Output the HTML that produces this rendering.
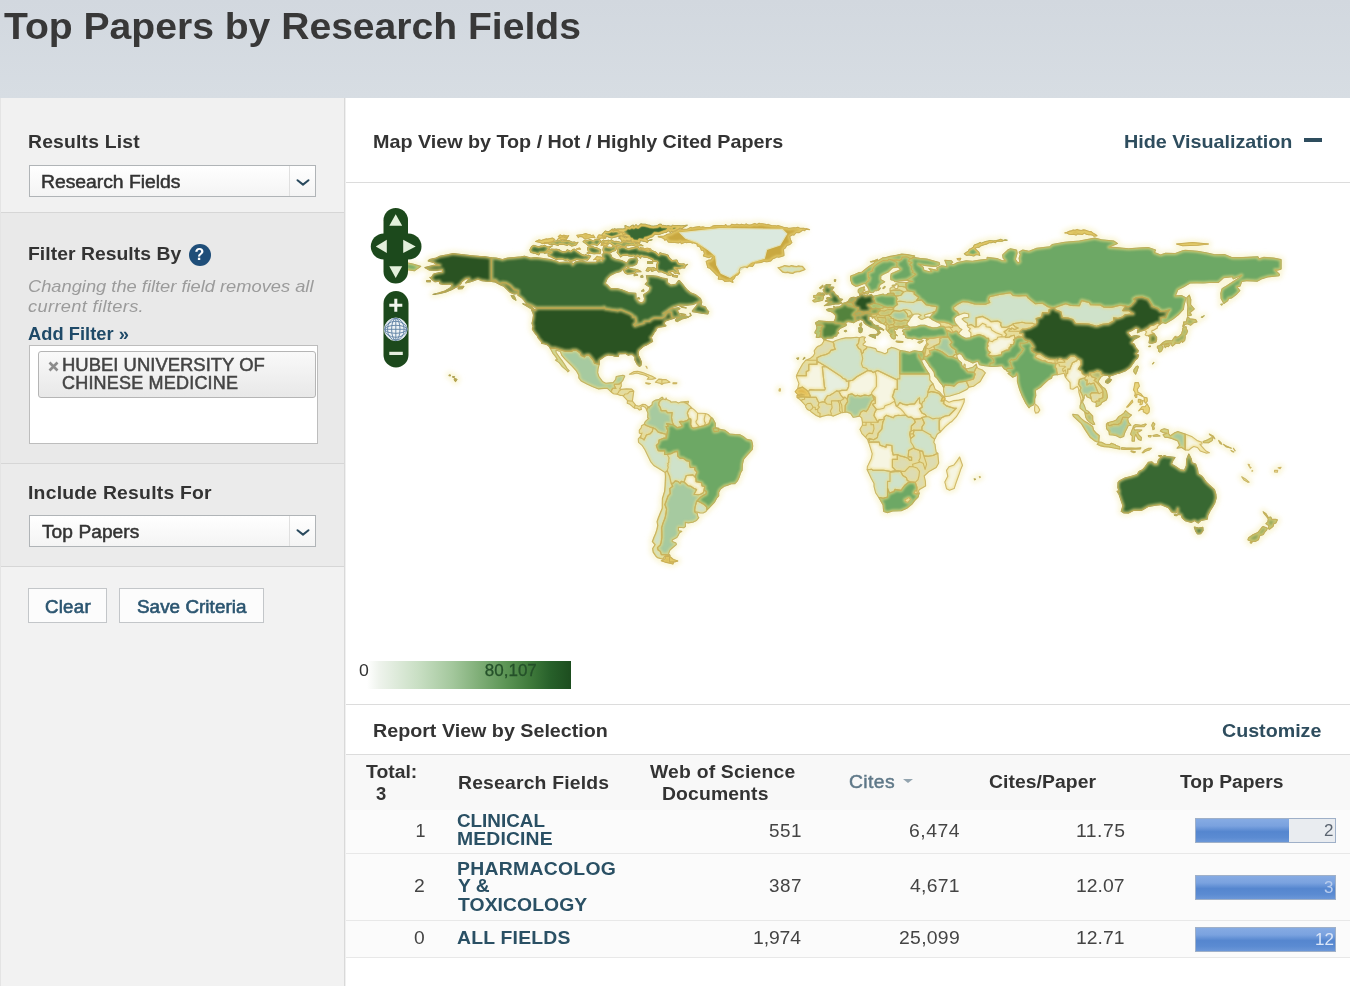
<!DOCTYPE html>
<html lang="en">
<head>
<meta charset="utf-8">
<title>Top Papers by Research Fields</title>
<style>
*{box-sizing:border-box;margin:0;padding:0}
html,body{width:1350px;height:986px;overflow:hidden}
body{position:relative;background:#f0f0f0;font-family:"Liberation Sans",Arial,sans-serif;color:#333}
.abs{position:absolute}
.t{position:absolute;white-space:nowrap;filter:blur(0.35px);transform-origin:0 50%}
#hdr{left:0;top:0;width:1350px;height:98px;background:linear-gradient(#d2d8df,#d7dde3)}
#side{left:0;top:98px;width:345px;height:888px;background:#f2f2f2;border-right:1px solid #d9d9d9;border-left:1px solid #e4e4e4}
.sec{position:absolute;left:0;width:343px}
#s1{top:0;height:115px;background:#f1f1f1;border-bottom:1px solid #d6d6d6}
#s2{top:115px;height:251px;background:#e9e9e9;border-bottom:1px solid #d6d6d6}
#s3{top:366px;height:103px;background:#ebebeb;border-bottom:1px solid #d6d6d6}
.sel{position:absolute;left:27.5px;width:287.5px;height:32px;border:1px solid #b0b4b7;background:linear-gradient(#ffffff,#f4f4f4)}
.sel .arr{position:absolute;right:0;top:0;width:26px;height:30px;border-left:1px solid #e0e0e0}
.sel .arr svg{position:absolute;left:5px;top:12px}
#main{left:346px;top:98px;width:1004px;height:888px;background:#fff}
.hline{position:absolute;left:346px;width:1004px;height:1px;background:#dcdcdc}
.btn{position:absolute;height:35px;border:1px solid #c3c6c9;background:#fcfcfc}
.bar{position:absolute;left:1195px;width:141px;height:25px;border:1px solid #9fb0c8;background:#e9ecf0}
.bar i{position:absolute;left:0;top:0;height:23px;background:linear-gradient(#86abe3 0%,#7aa2df 30%,#5586cf 55%,#5b8bd2 80%,#6b97d8 100%)}
</style>
</head>
<body>
<div id="hdr" class="abs"></div>
<div id="side" class="abs">
  <div id="s1" class="sec">
    <div class="sel" style="top:67px"><span class="arr"><svg width="16" height="9" viewBox="0 0 16 9"><path d="M2.5 2.2 L8 6.6 L13.5 2.2" fill="none" stroke="#2a4a5e" stroke-width="2" stroke-linecap="round" stroke-linejoin="round"/></svg></span></div>
  </div>
  <div id="s2" class="sec">
    <div class="abs" style="left:188px;top:31px;width:22px;height:22px;border-radius:50%;background:#1f4e79"></div>
    <div class="abs" style="left:28px;top:132px;width:289px;height:99px;background:#fff;border:1px solid #bdbdbd"></div>
    <div class="abs" style="left:37px;top:138px;width:278px;height:47px;background:linear-gradient(#f9f9f9,#e8e8e8);border:1px solid #b5b5b5;border-radius:3px"></div>
    <svg class="abs" style="left:46.5px;top:147.5px" width="11" height="11" viewBox="0 0 11 11"><path d="M1.5 1.5 L9.5 9.5 M9.5 1.5 L1.5 9.5" stroke="#8c8c8c" stroke-width="2.6"/></svg>
  </div>
  <div id="s3" class="sec">
    <div class="sel" style="top:51px"><span class="arr"><svg width="16" height="9" viewBox="0 0 16 9"><path d="M2.5 2.2 L8 6.6 L13.5 2.2" fill="none" stroke="#2a4a5e" stroke-width="2" stroke-linecap="round" stroke-linejoin="round"/></svg></span></div>
  </div>
  <div class="btn" style="left:27px;top:490px;width:79px"></div>
  <div class="btn" style="left:118px;top:490px;width:145px"></div>
</div>

<div id="main" class="abs"></div>
<div class="abs" style="left:1304px;top:138px;width:18px;height:4px;background:#2e4d5e"></div>
<div class="hline" style="top:182px"></div>

<svg class="abs" style="left:346px;top:183px" width="1004" height="470" viewBox="346 183 1004 470">
<defs><filter id="gl" x="-5%" y="-5%" width="110%" height="110%"><feGaussianBlur stdDeviation="2.4"/></filter><filter id="sb" x="-2%" y="-2%" width="104%" height="104%"><feGaussianBlur stdDeviation="0.6"/></filter><filter id="lb" x="-2%" y="-2%" width="104%" height="104%"><feGaussianBlur stdDeviation="0.75"/></filter><filter id="bg" x="-2%" y="-2%" width="104%" height="104%"><feGaussianBlur stdDeviation="1.3"/></filter></defs>
<defs><path id="land" d="M621.8,241.9L621.5,242.3L618.7,241.5L614.1,241.2L611.2,239.5L610.4,240.6L608.6,239.9L605.1,240.5L603.3,239.8L601.0,241.4L600.1,239.5L596.7,239.0L594.9,239.2L593.4,240.8L590.3,239.3L587.4,240.3L584.9,239.7L582.7,241.3L582.7,241.8L588.1,246.0L590.6,245.7L591.9,245.0L595.0,244.9L597.1,246.1L600.4,242.5L601.4,243.5L600.8,245.7L603.2,245.4L604.7,246.0L603.3,246.3L602.6,249.9L603.9,253.0L601.8,254.4L602.9,257.7L600.8,256.7L596.9,255.9L593.3,259.7L593.6,260.0L595.5,259.6L597.4,260.7L598.2,260.3L595.9,262.0L587.4,262.0L580.0,260.7L575.0,261.7L572.9,263.9L572.7,262.7L567.8,261.7L559.2,262.2L556.7,261.0L550.5,259.3L535.8,257.3L530.8,257.8L524.7,255.9L520.9,256.6L507.4,257.8L502.5,259.3L496.4,257.8L485.3,256.4L479.2,256.1L453.1,253.3L439.7,255.9L436.0,257.8L429.3,259.3L427.7,260.7L427.8,261.2L433.5,262.8L435.5,264.2L438.1,265.0L433.6,265.1L424.5,267.7L429.2,270.4L437.3,270.6L442.0,269.9L442.4,271.8L433.5,273.7L431.0,277.3L429.9,277.1L429.7,277.6L432.2,280.3L434.7,282.1L439.0,281.6L439.7,284.0L443.4,284.8L451.6,284.5L450.6,287.2L444.6,290.8L432.8,294.2L432.8,294.8L439.8,293.8L446.0,292.3L452.2,289.6L457.9,286.4L458.1,289.1L462.5,288.9L464.1,286.2L458.3,286.1L460.9,284.2L462.2,282.0L465.7,279.1L468.6,278.8L465.4,283.2L470.6,282.1L477.9,279.4L481.6,280.9L495.0,282.3L503.6,286.4L509.7,292.5L514.0,294.3L517.8,293.9L517.5,295.4L520.8,297.4L523.7,300.3L525.7,303.5L531.2,305.5L535.9,308.3L535.5,309.8L535.0,309.7L530.9,305.4L522.4,303.6L530.6,308.9L532.9,309.5L531.2,309.6L533.2,315.0L531.7,323.3L532.7,326.4L532.0,329.2L533.5,331.7L536.7,335.6L538.2,338.6L541.1,341.9L541.4,343.6L546.9,345.0L549.5,347.1L552.7,353.4L556.9,359.4L555.3,359.8L555.2,360.3L558.9,362.8L562.1,366.9L567.8,372.1L569.4,370.7L567.2,368.2L562.3,360.4L556.4,352.4L556.2,350.5L560.1,351.8L561.8,355.9L576.1,371.0L578.5,375.3L578.5,378.1L581.1,381.3L586.8,384.3L598.4,389.2L607.0,388.5L613.3,394.1L616.6,394.4L620.5,395.8L622.4,395.8L627.2,400.7L627.0,403.5L629.8,404.5L634.3,408.3L637.2,408.5L639.3,410.3L641.7,409.6L641.1,407.5L642.8,406.2L645.2,407.7L647.6,413.1L647.4,418.0L648.2,418.4L644.9,421.4L644.0,424.1L641.3,425.6L641.0,427.6L639.0,430.0L639.0,433.2L641.2,434.2L640.5,435.8L638.0,438.8L638.3,442.4L641.8,445.5L644.7,449.8L650.4,461.8L653.6,465.8L664.8,472.6L665.1,476.5L664.3,491.1L662.1,498.4L661.9,508.2L656.7,521.5L657.4,525.3L656.5,529.6L652.0,541.6L654.7,544.8L652.3,548.4L652.8,552.2L655.3,556.0L657.4,558.0L662.9,559.5L664.9,556.9L665.0,558.1L663.7,559.4L661.0,560.4L661.0,560.9L673.0,564.4L673.7,562.2L678.0,561.3L678.1,560.9L673.6,559.2L669.7,555.9L666.4,556.1L670.3,555.6L668.9,553.6L670.0,550.6L676.7,544.7L676.2,542.7L672.5,541.2L672.5,540.1L677.1,537.7L679.9,532.8L682.1,531.5L681.9,531.1L678.7,530.4L678.7,527.6L683.9,528.0L685.8,526.6L685.6,522.7L688.3,523.2L693.2,522.4L696.8,520.7L699.1,517.7L698.1,516.2L697.6,513.4L694.9,511.9L694.9,511.1L696.0,512.2L700.0,513.2L703.3,513.3L706.1,511.9L707.2,510.2L714.8,502.3L716.8,498.6L719.0,496.2L719.0,492.4L720.5,489.6L724.3,486.5L731.4,484.1L735.1,483.8L737.7,481.1L740.9,473.0L742.4,470.5L742.7,464.3L743.9,459.6L752.5,449.8L753.0,446.0L752.7,443.5L751.6,440.1L746.9,439.1L743.8,436.5L740.0,434.5L729.7,433.8L725.3,430.1L719.1,429.1L719.1,428.2L715.6,427.5L715.6,423.2L712.8,418.0L708.3,414.3L705.6,413.3L697.7,412.9L694.6,409.7L686.8,403.4L688.5,403.3L688.6,401.1L680.8,401.8L678.4,402.7L676.0,401.5L671.2,401.8L670.4,400.8L667.1,399.4L666.2,397.7L665.4,399.3L663.2,398.7L663.0,397.3L661.9,397.0L658.6,399.4L655.7,399.8L653.6,400.9L652.1,402.2L651.8,404.6L649.2,406.5L649.0,407.4L648.2,406.4L645.2,404.2L642.4,404.1L639.0,405.9L636.2,405.2L632.7,401.0L634.1,391.1L631.9,388.9L626.8,388.6L621.4,389.1L620.1,388.7L621.6,386.3L621.4,382.7L623.3,380.3L624.9,375.7L623.0,374.9L616.0,376.2L615.4,379.3L613.1,382.3L605.9,383.0L602.6,381.4L599.2,376.3L598.0,372.8L598.3,369.2L599.5,364.4L599.5,360.5L602.3,358.4L605.5,356.2L608.3,355.3L612.4,355.8L615.6,356.8L618.5,356.7L619.1,354.1L625.4,353.8L628.2,355.5L630.9,354.8L632.3,355.0L634.6,357.3L634.6,360.2L636.8,364.4L639.4,366.7L641.3,365.6L641.8,362.3L638.8,355.4L638.4,353.1L639.3,350.3L644.1,346.2L646.8,345.3L652.8,341.8L651.9,338.3L651.1,337.5L651.8,337.1L654.3,332.9L656.0,331.0L656.5,328.8L658.8,327.5L664.7,326.7L666.3,325.9L666.3,325.5L664.5,323.9L664.7,322.7L666.3,321.1L676.0,317.7L678.2,317.6L675.7,318.9L675.2,320.7L677.2,321.9L682.2,319.2L687.1,317.9L691.5,315.5L690.0,312.7L689.7,313.0L690.3,315.3L688.3,316.8L687.1,315.9L684.0,315.7L686.0,314.7L685.9,314.2L680.1,313.2L680.0,313.8L683.6,315.7L679.9,314.7L677.6,310.7L680.4,308.6L678.5,307.4L672.2,308.3L669.3,309.8L673.6,307.2L679.7,305.3L687.0,305.5L693.2,304.8L698.2,302.6L695.4,306.7L692.2,310.4L692.2,311.8L707.9,314.3L709.0,311.6L706.9,309.2L705.6,306.7L701.4,305.5L702.0,301.7L699.3,302.1L701.6,300.9L700.8,298.2L695.8,294.5L690.9,292.5L687.2,289.6L679.7,280.3L678.2,280.4L675.8,284.0L671.1,284.6L667.6,282.4L667.4,278.6L662.5,277.8L657.5,276.1L652.6,275.4L646.3,275.4L647.3,281.2L644.9,284.3L649.8,287.5L648.6,290.9L643.2,294.6L644.1,298.4L643.7,301.4L641.5,302.5L639.2,301.8L636.9,299.0L640.0,299.1L639.2,297.4L636.4,298.3L636.0,293.0L629.3,292.5L621.9,289.6L617.0,288.3L610.9,288.3L606.8,284.0L605.5,283.6L607.3,279.0L610.9,275.4L615.8,273.0L620.7,271.8L622.9,269.6L624.6,273.0L627.2,274.4L635.2,273.5L635.9,272.2L641.3,271.8L641.2,271.3L637.7,269.4L629.8,267.9L627.5,266.7L626.6,268.5L623.6,269.1L626.8,266.5L633.0,266.2L636.8,264.4L638.1,260.6L636.9,257.7L637.6,256.1L640.7,258.5L641.5,256.5L643.1,257.2L647.1,257.7L652.4,260.0L652.6,261.2L647.5,261.3L647.6,263.8L652.7,263.8L652.9,261.5L656.4,261.9L657.3,262.5L656.2,264.9L656.5,268.8L653.6,267.2L651.2,267.7L647.5,267.4L645.9,271.1L648.3,271.6L651.2,269.8L651.9,271.7L656.2,270.0L658.4,272.2L661.1,272.0L666.7,274.3L667.2,275.2L670.5,275.5L672.7,274.8L672.4,276.7L677.5,277.4L677.9,275.6L672.9,275.1L672.0,273.7L669.8,272.2L673.0,271.6L675.1,274.0L676.7,273.3L679.8,274.2L679.9,273.8L678.4,271.6L678.3,270.1L676.1,268.6L680.8,268.9L681.8,268.1L684.9,268.3L685.1,267.0L687.8,264.6L687.8,264.2L685.4,265.0L684.3,263.6L678.7,263.3L677.0,259.8L672.5,260.2L670.2,258.2L668.8,256.5L668.3,254.9L659.9,252.4L658.9,254.4L655.8,251.6L652.9,250.7L651.8,249.8L648.6,250.7L647.1,250.3L650.9,249.4L650.9,248.8L647.8,247.9L644.3,248.4L643.1,247.5L641.9,247.9L640.3,247.1L639.6,248.3L638.2,246.5L638.6,246.1L643.4,245.9L638.4,242.9L640.0,243.3L640.3,240.8L645.4,241.9L647.5,242.8L648.5,240.8L652.3,240.0L652.1,239.4L648.3,240.3L646.6,239.0L648.0,239.0L650.1,237.7L652.7,236.9L655.1,234.4L659.0,234.9L664.6,232.7L666.1,232.7L668.4,231.1L670.4,232.8L671.8,231.5L672.5,232.1L670.6,233.5L666.2,234.3L665.6,235.1L663.5,236.0L660.2,236.1L658.0,236.4L657.7,236.8L663.5,238.7L664.7,240.6L666.3,239.7L668.3,242.4L678.5,243.2L680.2,242.3L681.4,244.0L685.0,242.6L686.5,242.9L689.0,242.6L692.3,243.4L693.5,243.1L696.8,244.4L697.1,246.2L699.9,247.3L701.2,250.5L703.3,250.8L704.1,253.2L703.2,256.2L708.9,258.0L711.0,256.9L712.4,257.5L710.6,259.8L708.9,259.7L705.9,261.2L707.3,267.5L709.5,268.4L715.8,274.9L718.4,276.6L718.1,279.3L722.0,279.7L723.2,280.1L724.6,281.7L729.6,281.2L733.0,282.7L733.3,282.4L732.7,280.3L734.5,278.8L735.7,276.1L738.2,275.1L739.9,272.6L739.5,270.4L740.6,268.3L745.1,267.1L747.2,268.1L749.3,266.2L752.6,266.8L754.8,263.3L761.2,262.8L764.2,261.6L767.6,261.9L770.9,261.2L773.1,259.0L777.0,257.2L778.7,257.5L784.2,255.9L783.7,249.5L785.4,248.3L786.9,245.8L789.9,244.8L792.1,242.7L790.0,236.6L792.6,235.1L794.1,235.3L796.3,232.8L799.3,232.9L803.0,230.4L805.0,231.0L805.9,228.9L803.8,228.0L800.0,228.1L798.0,226.9L795.7,227.6L793.6,227.4L788.8,228.1L783.6,227.1L777.9,225.3L776.9,225.8L772.5,225.4L768.3,224.1L766.3,224.4L759.0,222.9L757.0,224.2L754.8,223.2L749.3,224.8L746.1,223.6L744.5,224.7L741.3,224.0L739.7,224.6L737.0,223.9L734.7,224.5L731.6,224.0L730.0,225.6L727.1,225.8L725.7,224.2L724.3,225.5L721.8,225.2L714.8,225.3L712.6,225.8L709.8,227.2L705.3,227.3L703.1,226.6L700.7,227.0L699.6,226.3L691.9,227.7L691.1,227.0L686.8,229.1L682.4,229.1L679.7,229.7L679.0,229.0L680.1,228.2L682.3,229.0L684.0,227.3L687.6,225.0L680.8,225.7L672.1,225.0L671.5,226.1L668.2,225.4L666.7,225.7L663.1,225.1L662.6,225.5L661.1,223.9L659.0,224.1L657.0,225.5L653.4,225.9L651.1,225.7L645.4,224.0L640.9,223.6L637.9,226.1L636.1,224.4L633.8,226.3L633.1,224.7L629.4,227.0L625.0,225.2L624.9,228.5L616.5,228.8L616.3,229.3L614.8,228.5L612.8,229.2L612.4,228.7L609.1,231.2L607.4,231.4L605.1,230.7L601.8,234.4L602.2,235.5L600.1,234.6L598.4,234.7L596.8,237.8L600.2,238.7L601.5,238.2L605.3,238.8L605.5,238.1L606.1,237.9L606.2,236.3L611.8,238.3L620.4,235.8L619.5,237.5ZM629.1,259.1L626.6,262.6L621.9,260.3L615.8,259.1L612.2,257.4L611.0,254.3L608.2,252.8L610.5,253.0L612.8,251.6L615.7,250.7L616.2,248.4L617.5,250.4L616.8,252.7L620.4,257.2L623.0,255.7L627.5,255.5L628.6,256.2L632.0,256.6L633.2,256.1L635.9,257.5ZM616.3,246.4L617.2,245.4L620.7,246.7L620.2,247.1ZM628.1,246.0L631.5,245.3L636.3,246.8L628.4,248.5L626.0,247.6L626.7,245.8ZM629.2,241.2L631.0,240.3L631.0,241.6L626.4,240.9L626.7,240.5ZM634.8,242.0L634.6,242.0L634.7,242.0ZM636.1,243.8L635.1,242.1L637.6,242.7ZM623.3,235.8L623.6,236.1L627.2,237.2L625.6,237.7L622.9,236.4ZM615.3,230.2L614.5,230.3L614.7,230.0ZM608.4,245.0L608.2,243.3L609.9,243.5L613.2,245.7L611.4,247.1L607.6,246.7L606.7,245.8ZM606.7,243.7L606.1,243.5L607.0,243.3ZM599.9,259.5L602.6,259.3L602.0,260.9L598.4,260.3ZM684.6,402.4L685.7,401.9L685.7,402.9ZM578.3,237.9L579.7,236.7L582.4,237.1L584.3,239.1L587.7,239.0L590.2,238.0L592.5,237.6L594.9,238.1L595.3,237.8L593.4,234.7L591.7,235.3L585.7,233.2L581.9,234.4L576.6,235.1L576.5,235.6ZM557.9,236.7L559.2,237.4L557.0,239.6L557.1,240.1L558.9,238.9L561.3,239.9L563.4,239.5L566.2,240.1L569.0,235.5L568.6,235.2L567.4,235.7L563.9,234.9L562.0,235.4L560.1,234.6ZM566.1,237.7L565.8,237.8L564.3,237.0L564.8,237.0ZM535.2,241.4L535.4,241.8L540.4,242.9L541.9,243.9L548.6,243.5L549.1,244.7L554.1,244.5L558.1,245.8L559.4,244.5L563.8,244.7L567.4,245.7L568.8,244.8L571.5,246.4L576.7,245.0L578.3,242.4L578.0,242.1L576.4,242.6L574.7,241.7L572.4,241.9L568.7,240.3L562.0,240.8L560.9,239.8L553.6,241.1L555.1,239.4L552.4,237.8L547.7,238.8L546.4,238.6L541.4,240.2L538.9,239.6ZM576.0,249.0L576.3,249.4L580.8,249.4L579.5,247.6ZM530.7,252.7L534.9,253.5L538.8,255.2L540.2,252.9L543.9,253.0L544.2,253.5L549.3,253.0L547.8,253.6L548.1,256.1L556.8,260.0L558.0,259.4L562.3,259.4L565.7,260.8L567.1,260.1L570.3,261.9L575.9,260.3L576.1,259.8L582.5,260.6L585.3,260.0L587.7,260.5L591.1,256.1L586.6,255.0L586.0,254.1L584.6,254.8L582.3,254.3L574.5,248.9L572.7,249.1L570.7,250.9L567.1,249.4L566.3,251.0L563.0,251.4L559.8,250.2L559.7,249.5L556.3,248.9L551.6,248.8L548.6,249.6L549.2,248.6L552.6,246.1L552.6,245.7L547.3,246.5L544.5,245.0L542.9,245.7L541.0,245.6L538.7,246.4L533.9,245.0L531.4,246.3L529.6,249.8ZM586.8,253.4L588.1,254.2L590.5,253.4L593.2,254.0L600.3,253.9L600.9,249.7L598.7,248.4L594.8,247.3L592.6,246.1L587.6,247.1L587.2,250.1L589.3,252.0L587.2,252.1ZM395.3,269.3L397.9,267.5L397.9,268.2L414.5,271.1L421.1,266.4L412.8,263.7L405.4,262.2L395.5,259.3ZM633.9,275.9L637.9,275.5L638.1,275.1L636.6,273.9L634.1,274.2ZM640.5,277.3L643.2,277.4L642.7,275.2L640.8,275.5ZM426.5,282.0L430.5,282.1L430.7,280.5L426.6,280.3ZM641.2,291.0L644.1,291.3L643.7,289.2L643.3,289.1ZM515.9,300.6L516.3,300.3L514.5,295.7L510.9,295.2L512.6,298.6ZM645.8,365.9L645.7,366.4L647.3,368.7L646.9,366.6ZM648.4,377.5L647.0,379.5L652.6,379.4L656.1,378.5L652.2,375.9L642.8,372.3L637.9,371.0L634.0,371.3L629.1,374.2L629.4,374.6L632.9,374.3L636.6,373.4L645.1,375.5ZM448.9,375.9L450.5,376.0L450.6,374.8L449.0,374.7ZM452.6,377.4L454.1,377.7L454.8,376.6L452.7,376.2ZM454.0,380.0L455.6,381.9L457.3,379.3L454.5,378.1ZM645.8,383.7L649.1,384.4L650.9,383.5L645.6,382.5ZM782.4,272.4L785.2,273.1L787.7,272.7L792.9,273.7L794.9,272.5L799.6,271.9L805.4,269.4L802.7,266.1L798.6,265.6L796.5,266.2L791.3,265.3L789.1,266.1L784.6,265.3L777.7,267.5ZM820.6,288.9L823.3,286.6L822.9,284.9L819.4,287.7ZM825.0,295.2L824.5,293.8L823.4,292.7L820.6,293.0L820.3,292.5L817.8,292.9L816.6,294.4L816.9,294.9L813.5,295.3L813.5,297.6L815.6,298.2L812.4,300.7L813.5,302.0L814.7,302.3L822.7,300.6L823.8,297.7L823.5,295.7ZM824.0,305.5L824.3,305.9L835.4,304.3L839.1,304.2L842.0,303.0L840.7,301.9L842.9,299.2L839.3,298.4L838.3,295.7L835.6,294.3L834.6,292.1L833.3,290.8L831.8,290.8L834.2,287.1L829.3,286.7L830.9,284.9L830.8,284.4L825.9,284.4L823.7,286.6L824.0,288.9L822.7,289.9L824.3,292.9L825.8,293.6L825.7,294.5L829.6,294.1L829.7,295.3L830.8,297.1L826.8,297.5L826.5,299.0L827.5,299.6L825.0,301.2L829.0,302.3L827.8,302.5L825.6,304.7ZM686.3,308.2L686.4,307.6L679.3,305.8L682.0,307.7ZM833.7,321.5L818.6,320.7L815.3,322.6L816.6,327.6L816.1,329.5L814.9,331.5L814.6,333.2L816.4,334.2L816.0,337.7L821.2,337.2L824.2,340.0L823.5,340.2L823.3,341.7L821.4,344.4L817.2,346.3L815.9,347.7L813.9,350.7L814.4,353.5L813.0,355.8L809.9,358.4L805.6,360.0L802.4,363.8L798.9,369.7L796.2,375.5L796.1,376.9L798.6,383.6L797.4,388.4L795.0,391.8L797.2,394.6L796.7,395.7L797.0,397.7L801.2,401.2L805.3,405.7L805.4,407.1L807.3,409.9L809.8,411.0L816.0,415.8L819.7,417.4L828.5,415.2L833.4,416.4L841.3,413.1L846.6,412.4L850.4,413.8L852.9,417.5L859.2,416.4L861.4,418.1L862.1,422.1L862.1,425.2L859.7,429.5L861.7,433.7L867.5,440.0L871.9,453.8L871.0,458.3L867.0,466.7L866.9,469.9L873.7,483.7L873.7,486.3L875.3,492.8L882.8,505.1L883.4,511.7L887.5,512.9L892.7,511.3L901.3,511.0L907.1,508.5L912.3,504.3L914.8,500.9L918.3,497.4L919.5,493.2L918.8,491.1L919.7,489.7L925.9,486.1L925.7,481.3L924.5,476.1L929.3,471.6L936.4,467.7L939.0,463.2L938.1,453.3L936.5,451.9L935.3,444.2L934.1,442.3L935.0,439.3L937.4,434.5L940.8,431.9L945.5,426.9L949.9,423.1L951.7,422.1L956.6,416.9L961.1,409.5L964.3,402.4L964.5,398.6L953.9,400.3L949.0,402.0L945.1,399.7L945.4,398.4L944.5,396.5L942.8,395.3L939.8,391.8L935.6,389.4L933.3,383.6L930.1,379.8L930.1,376.4L929.3,373.9L923.9,365.3L918.9,356.1L920.7,359.1L922.5,360.2L923.2,359.4L924.7,359.5L929.6,367.1L931.5,369.1L934.0,372.7L934.5,376.4L937.0,378.6L942.1,385.4L943.3,387.8L943.3,391.6L944.3,395.4L945.3,397.1L950.1,396.3L959.2,393.6L966.9,389.9L969.1,387.4L973.8,386.5L980.5,381.7L985.7,372.9L982.6,369.9L978.3,368.3L977.1,366.8L976.4,363.8L972.7,366.9L967.7,368.3L965.3,368.2L964.8,367.9L965.5,367.7L965.5,364.6L964.1,363.8L963.2,366.6L962.1,365.1L961.8,362.4L958.6,359.9L956.7,354.8L957.9,354.9L958.9,353.9L961.3,354.5L964.8,359.9L972.8,363.3L976.6,361.9L978.1,361.9L979.2,365.0L991.5,366.8L1001.7,366.0L1003.7,368.9L1005.9,370.1L1006.7,371.4L1009.6,372.7L1007.8,373.1L1007.6,373.5L1012.6,377.5L1015.8,376.2L1016.6,374.5L1017.1,376.5L1017.1,381.4L1019.6,390.2L1025.5,403.4L1029.0,408.3L1030.7,406.5L1033.6,405.2L1035.0,402.7L1035.0,399.0L1036.1,395.7L1035.7,390.5L1040.9,387.2L1048.8,379.9L1051.8,378.4L1052.6,375.7L1063.9,373.6L1065.1,377.2L1069.7,382.7L1070.1,388.9L1073.1,389.6L1077.3,386.9L1078.3,388.7L1078.6,392.4L1080.6,399.2L1080.6,403.3L1079.8,405.7L1079.8,408.3L1084.4,412.1L1085.5,417.5L1087.3,420.6L1092.8,424.8L1094.8,424.6L1095.0,424.2L1093.1,420.3L1092.9,415.9L1088.9,411.4L1086.0,409.9L1084.3,404.9L1082.8,402.1L1084.3,398.5L1084.6,395.5L1086.2,395.2L1086.5,396.9L1089.6,398.2L1091.2,399.4L1091.5,401.1L1092.8,402.1L1095.1,402.6L1096.0,403.4L1095.8,407.0L1097.5,406.7L1101.0,404.8L1102.0,402.7L1106.7,400.1L1107.7,397.2L1106.7,390.9L1105.0,388.2L1102.2,386.5L1098.6,382.0L1099.1,380.2L1101.2,377.2L1103.9,375.4L1108.2,375.8L1109.7,378.5L1110.2,376.2L1119.3,373.6L1125.8,371.1L1130.5,367.7L1135.9,359.9L1137.7,358.8L1139.0,354.9L1136.4,353.7L1138.2,352.4L1138.5,350.3L1136.0,347.3L1134.5,343.8L1132.0,342.7L1134.4,339.8L1140.2,336.3L1135.5,335.2L1131.2,336.3L1128.3,332.6L1132.7,330.6L1136.0,328.2L1138.2,329.0L1137.4,330.0L1137.4,333.1L1144.2,330.4L1146.2,331.9L1144.8,334.9L1146.2,335.9L1148.3,335.9L1149.4,337.5L1148.8,343.2L1152.0,343.6L1156.0,342.3L1156.9,339.9L1156.9,337.3L1154.3,333.3L1152.0,331.9L1152.2,330.8L1154.0,330.4L1157.5,328.4L1157.7,326.8L1159.9,324.7L1162.8,322.9L1165.6,323.8L1173.0,319.4L1179.2,314.5L1183.7,309.5L1184.2,305.8L1186.4,297.8L1181.5,295.2L1175.8,295.6L1178.0,290.1L1190.2,283.3L1218.4,282.8L1223.9,277.9L1232.4,277.0L1233.2,279.2L1240.4,276.1L1239.1,277.4L1221.8,288.5L1220.5,293.5L1220.8,298.4L1223.9,303.8L1227.9,301.0L1228.9,298.7L1232.1,298.1L1237.0,294.2L1240.0,290.8L1237.4,286.9L1240.2,286.4L1242.0,281.8L1246.7,280.9L1257.3,281.6L1261.5,279.1L1267.6,277.2L1279.3,275.9L1279.6,274.1L1275.8,270.2L1277.5,270.4L1281.4,269.2L1281.4,259.6L1273.8,257.8L1263.9,257.1L1259.1,258.5L1258.0,256.4L1241.7,257.3L1232.0,257.3L1224.6,254.2L1214.7,254.4L1197.5,251.0L1185.2,250.0L1182.6,250.5L1175.3,253.2L1165.5,252.9L1160.6,254.6L1154.8,252.4L1155.8,249.8L1148.3,247.3L1128.6,248.5L1110.2,246.9L1117.8,243.4L1113.9,240.7L1101.6,239.5L1094.9,237.8L1079.3,240.7L1064.6,242.0L1052.3,244.2L1049.7,246.4L1036.3,248.1L1028.9,251.0L1022.7,249.8L1018.8,251.9L1020.0,254.5L1018.8,258.1L1019.5,261.6L1018.0,262.6L1015.7,259.3L1017.4,253.3L1016.9,249.9L1010.5,248.5L1007.9,249.6L1002.4,254.8L1002.8,258.2L1004.9,260.6L1002.0,260.3L997.0,258.3L987.1,257.1L986.8,259.1L972.4,261.0L966.2,260.5L957.5,262.2L953.9,264.2L951.0,264.0L953.0,262.3L951.6,260.5L944.8,260.0L944.5,260.4L946.7,266.3L941.5,265.4L936.5,267.7L937.4,269.8L928.7,268.3L928.6,268.8L931.1,271.3L929.3,271.5L924.2,270.1L923.4,267.0L919.9,264.7L924.4,265.7L933.0,266.7L936.7,266.5L939.9,264.9L939.4,262.3L926.9,258.8L913.5,257.2L915.0,256.3L914.9,255.8L907.2,254.3L901.7,253.8L885.0,257.5L882.5,257.6L878.8,260.0L876.7,260.6L877.9,259.5L877.6,259.0L870.2,261.5L870.1,262.0L871.5,262.3L874.6,261.6L873.5,263.3L868.4,266.4L861.6,272.0L859.1,272.2L850.6,275.7L850.2,276.7L850.6,280.6L851.9,284.2L855.5,286.5L858.1,286.2L863.7,284.0L865.6,283.8L865.8,285.6L867.3,287.1L869.0,290.7L865.5,291.5L865.2,292.4L864.9,292.0L862.8,292.2L863.6,291.1L865.4,290.2L864.1,289.4L864.6,286.6L859.3,288.1L857.9,289.8L858.0,292.3L859.9,295.0L859.3,295.9L856.0,297.3L853.5,297.0L849.7,298.2L848.2,300.6L846.5,302.0L842.1,303.2L841.7,305.2L838.5,306.6L835.4,306.9L833.5,306.2L834.0,308.7L829.7,308.3L826.3,309.4L827.3,311.1L831.0,312.0L835.1,315.1L835.1,318.8ZM895.3,347.9L891.4,347.1L887.6,349.1L887.2,352.1L885.0,353.4L877.1,350.8L875.8,348.4L866.8,346.5L863.4,344.8L863.4,344.1L865.9,341.9L864.7,340.4L864.4,339.0L865.7,337.3L862.4,336.4L859.4,337.4L856.8,337.0L845.6,337.6L835.7,340.3L832.9,341.7L825.2,339.8L827.6,338.5L833.0,338.3L834.5,336.7L836.8,336.2L837.3,334.4L839.1,333.2L837.9,331.3L840.2,328.6L846.4,325.6L846.7,324.4L846.0,322.7L848.2,321.9L853.6,323.0L860.2,319.7L862.2,320.5L863.4,321.6L863.9,323.1L865.5,324.5L870.1,327.3L874.6,328.8L876.7,330.3L877.8,332.5L876.8,334.1L871.1,334.2L868.6,335.4L875.6,338.5L875.7,336.3L876.5,335.1L878.1,335.4L880.8,332.7L879.2,330.8L880.2,329.2L882.2,329.6L883.4,330.9L884.1,329.7L877.9,326.3L878.3,325.2L875.3,325.0L873.5,323.9L872.0,321.2L869.1,319.7L869.3,318.1L869.0,317.3L870.6,316.5L871.5,316.6L872.3,318.6L873.9,317.6L875.5,320.1L880.0,323.0L883.7,324.4L885.5,325.7L886.0,327.0L885.8,329.5L890.0,334.5L890.9,334.5L889.9,335.5L891.4,338.1L893.5,339.2L895.5,338.9L895.7,336.7L895.3,335.4L895.8,335.3L897.4,336.1L897.8,335.9L895.1,332.9L895.9,332.2L894.2,330.1L894.7,329.1L895.8,329.8L897.0,329.9L898.5,328.1L902.4,328.4L903.2,328.1L908.9,328.1L909.2,328.8L905.4,328.8L902.5,329.9L902.2,331.6L904.0,332.8L902.7,334.4L905.2,335.4L905.6,337.7L912.6,339.4L913.7,338.3L918.2,339.9L921.3,339.8L923.5,338.3L926.8,338.7L925.8,340.1L926.5,343.1L922.4,351.3L914.5,350.4L909.6,352.1L900.3,350.2ZM884.4,294.7L883.3,293.7L873.3,295.9L871.3,294.1L865.5,295.7L865.5,294.7L863.5,294.7L861.9,293.9L862.4,293.0L862.9,293.7L864.9,293.7L865.2,293.2L867.4,294.7L868.6,293.8L869.6,291.8L870.2,292.8L873.6,292.5L874.6,291.1L876.8,291.0L878.8,289.6L878.3,290.4L878.8,290.6L880.1,289.3L880.7,288.0L880.2,287.7L878.9,289.4L880.4,284.7L885.1,281.8L880.9,279.4L881.1,275.9L888.4,272.3L893.0,267.9L897.6,267.5L900.2,269.1L891.0,273.5L890.4,276.7L890.7,280.0L893.0,280.5L894.7,282.0L906.7,280.4L909.6,281.1L907.1,282.3L902.2,282.0L895.7,283.0L895.9,284.6L898.2,285.5L897.3,288.2L895.5,288.3L894.0,286.5L891.3,287.0L889.7,288.5L890.1,292.8L887.4,293.4L886.5,294.6ZM939.5,418.3L940.9,418.1L939.5,420.0ZM940.3,326.2L936.6,327.4L932.8,327.6L924.9,324.9L920.2,324.9L915.5,326.6L910.0,326.9L907.5,325.1L907.2,323.6L911.5,317.2L914.1,314.5L918.4,314.3L920.6,315.3L918.0,317.1L920.3,319.3L922.0,319.7L928.6,317.1L928.3,316.6L925.3,316.9L924.8,315.2L932.3,313.1L933.7,313.1L931.6,314.5L930.3,316.4L928.6,317.5L931.1,318.9L931.6,319.6L939.9,323.7L940.6,325.0ZM962.3,329.5L960.3,328.4L955.4,322.6L954.3,318.7L956.6,316.2L964.3,313.3L968.4,314.2L968.4,316.9L963.7,317.6L961.7,318.9L964.1,321.4L967.1,323.4L967.1,326.0L968.0,327.4L969.9,328.7L968.4,330.6L970.6,332.9L970.6,337.4L966.0,338.1L962.0,336.2L959.0,333.8L959.8,332.0ZM805.4,358.0L804.2,357.2L802.9,359.5L803.3,359.6ZM798.0,359.7L799.0,358.0L798.8,357.6L796.4,358.3ZM661.8,384.8L663.8,383.6L670.1,382.6L670.3,382.2L666.2,379.3L658.7,378.8L655.0,382.2L655.2,382.6L659.8,383.6ZM672.8,384.0L676.5,384.1L677.2,382.9L672.9,382.4ZM778.8,391.0L780.5,391.3L780.7,388.7L779.0,388.5ZM834.1,281.5L835.6,281.8L836.1,279.6L834.2,279.6ZM882.9,289.0L884.5,288.3L885.5,286.5L884.3,286.2L882.6,288.0ZM859.2,325.7L860.6,326.8L858.2,327.8L858.7,332.1L860.2,333.1L862.0,332.2L862.7,328.9L861.2,326.9L862.1,325.0L861.6,322.5L859.2,324.1ZM845.8,332.1L847.0,331.1L845.9,329.9L843.9,331.1ZM892.3,286.4L895.0,286.2L895.9,284.6L892.0,285.2ZM895.9,341.9L899.0,342.7L902.8,342.6L903.3,341.6L896.1,340.8ZM919.5,343.6L921.9,342.5L923.6,340.4L919.4,341.2L917.5,342.0L917.6,342.4ZM1076.1,235.4L1077.7,234.3L1082.3,234.8L1084.3,233.5L1086.4,234.6L1092.7,235.6L1094.0,236.6L1097.4,235.8L1091.2,231.3L1089.9,231.4L1083.7,229.6L1081.2,230.2L1077.1,229.1L1075.2,229.9L1073.1,229.7L1064.5,232.9L1064.7,233.2L1066.7,233.2L1069.1,234.6L1074.1,234.7ZM964.0,253.8L966.2,255.6L969.1,255.2L973.9,256.3L975.8,255.1L978.1,255.1L980.0,255.8L979.2,252.1L975.3,248.4L977.5,247.6L979.2,247.6L980.6,246.2L987.0,244.2L989.0,243.0L991.2,243.1L993.3,242.2L995.5,243.0L997.0,241.5L1001.6,241.6L1005.0,240.0L1003.3,240.1L1000.9,239.0L998.4,239.8L993.7,240.6L990.0,240.2L985.6,241.2L981.3,242.9L980.1,242.2L974.1,244.9L972.9,247.1L970.6,248.7L969.1,248.9L968.3,250.8ZM957.5,260.1L960.2,260.3L961.1,258.2L957.0,258.3ZM1133.4,371.6L1135.8,374.5L1137.2,371.4L1138.6,366.5L1137.4,365.7L1135.8,366.5L1133.7,369.5ZM1105.5,382.7L1108.1,383.6L1110.4,382.0L1111.6,379.5L1109.0,378.4L1107.8,378.6L1105.4,380.7ZM1135.3,397.7L1136.9,397.6L1137.1,395.0L1134.2,394.8ZM1133.0,402.3L1132.6,400.0L1132.2,399.8L1126.4,407.4L1128.0,407.2ZM1035.3,413.2L1038.2,412.8L1040.1,410.1L1038.3,406.5L1035.1,403.5L1034.3,407.7L1034.3,410.6ZM1129.5,417.5L1131.8,414.9L1129.0,413.3L1125.5,410.3L1123.7,412.9L1118.5,416.4L1116.1,419.7L1112.5,421.4L1112.0,421.1L1107.9,422.4L1106.2,423.8L1106.4,429.0L1108.6,431.5L1109.2,435.0L1116.2,436.0L1120.2,438.0L1123.9,436.7L1124.7,433.9L1128.3,426.0L1131.3,425.3L1128.9,422.2L1128.2,419.6L1128.6,417.7ZM1073.0,416.4L1081.1,423.7L1089.7,437.4L1094.7,441.4L1097.3,442.3L1098.6,442.2L1096.9,444.5L1099.9,445.9L1103.9,446.9L1108.9,447.3L1120.2,449.2L1119.9,446.5L1115.8,445.1L1115.6,444.5L1111.4,443.0L1109.8,444.2L1105.5,443.9L1101.6,441.9L1099.1,441.8L1099.6,435.4L1096.6,433.1L1093.9,430.0L1092.9,426.3L1088.9,423.3L1085.2,421.3L1081.3,418.2L1078.3,414.8L1072.6,413.9ZM1130.2,434.3L1132.0,436.3L1131.9,441.4L1134.7,441.3L1134.8,437.5L1135.7,435.0L1138.2,439.6L1141.3,440.6L1141.6,437.3L1139.1,434.8L1137.7,432.5L1139.3,432.1L1142.1,429.9L1134.9,429.8L1134.1,428.1L1136.0,426.9L1144.2,427.0L1146.5,424.1L1145.3,423.7L1140.9,425.1L1135.3,424.3L1133.2,425.9ZM1121.2,449.3L1128.6,449.7L1140.4,449.2L1141.2,447.8L1126.1,447.8L1121.7,447.2ZM1130.8,451.8L1134.0,453.1L1135.8,451.9L1131.0,450.6ZM948.8,466.5L946.3,470.3L947.5,476.2L944.5,481.9L946.3,488.9L949.5,490.5L954.4,488.7L961.1,469.3L962.8,465.4L959.8,456.8L959.3,456.8L953.7,464.8ZM979.6,478.0L980.8,476.9L979.2,476.2L979.0,476.6ZM974.8,480.2L975.8,479.0L973.9,478.7L973.8,479.1ZM1208.6,244.3L1208.6,243.7L1192.5,242.2L1176.3,244.0L1182.7,246.0L1197.5,245.5ZM1221.5,305.5L1222.8,304.2L1222.7,303.7L1220.6,304.1ZM1186.6,297.6L1187.6,306.9L1187.3,315.8L1191.1,315.7L1191.6,314.1L1190.1,313.0L1194.6,308.9L1190.9,304.4L1191.1,299.6L1189.5,294.7ZM1202.5,317.7L1204.6,315.9L1204.6,315.5L1200.9,317.1L1201.0,317.4ZM1184.7,325.8L1184.2,324.5L1185.2,324.8L1187.1,324.1L1190.9,325.5L1193.7,323.1L1197.3,321.8L1195.9,319.3L1190.2,318.6L1187.5,316.4L1185.9,321.7L1183.4,321.8L1182.4,326.5ZM1170.6,344.2L1172.4,346.4L1175.3,344.2L1175.4,343.6L1179.8,343.6L1181.9,341.4L1182.1,342.7L1182.4,342.8L1184.9,340.7L1185.5,335.4L1186.7,334.4L1187.9,331.1L1186.7,328.8L1186.3,326.5L1183.2,327.0L1182.4,328.6L1182.4,330.1L1181.2,333.6L1178.8,336.2L1175.9,337.4L1176.3,336.0L1174.7,336.4L1172.6,339.2L1172.2,340.5L1165.4,340.7L1160.0,344.8L1157.2,346.0L1157.1,348.0L1158.3,349.3L1158.3,351.5L1159.8,352.4L1161.8,351.2L1163.3,347.6L1162.5,345.5L1161.2,345.0L1168.0,343.6L1170.9,343.4ZM1163.7,346.3L1165.5,348.1L1166.4,346.5L1168.5,346.9L1170.0,345.2L1168.4,343.6L1164.1,344.7ZM1148.5,346.8L1150.3,346.8L1150.7,345.8L1148.6,345.9ZM1154.2,362.4L1153.7,362.1L1152.2,364.2L1153.4,363.7ZM1133.2,390.0L1134.7,392.4L1135.0,394.3L1138.3,394.8L1143.8,397.2L1144.3,401.9L1146.0,403.5L1147.6,400.9L1147.3,397.8L1143.9,397.0L1141.1,393.5L1138.2,392.1L1137.8,389.2L1139.7,386.2L1138.6,382.3L1134.7,382.4ZM1137.9,402.3L1139.9,402.6L1140.3,402.2L1139.7,405.0L1142.0,404.8L1143.6,400.3L1140.9,400.8L1141.3,399.4L1138.3,399.1ZM1143.1,412.0L1147.0,414.3L1149.3,412.5L1149.8,408.1L1147.2,403.5L1144.9,406.4L1141.9,406.5L1138.4,410.8L1138.8,411.1L1141.0,409.7L1143.0,409.7ZM1152.7,429.9L1154.7,429.0L1154.0,426.5L1155.2,424.1L1153.2,422.0L1151.4,425.2ZM1153.0,436.5L1156.9,436.5L1160.4,436.0L1156.9,434.2L1152.8,435.2ZM1148.3,437.0L1150.9,437.2L1151.5,435.4L1148.1,435.2ZM1214.7,439.1L1215.2,438.8L1213.7,436.0L1209.1,433.8L1209.5,435.0L1213.5,437.7ZM1160.0,431.1L1162.9,432.9L1166.0,433.4L1162.7,434.7L1164.8,437.7L1166.7,437.5L1171.5,438.7L1177.5,441.3L1179.2,445.2L1176.8,448.0L1176.9,448.5L1181.4,447.8L1185.1,450.2L1188.9,450.4L1193.8,446.8L1197.3,447.7L1200.1,451.2L1206.0,453.4L1209.8,452.8L1206.2,450.9L1200.5,444.4L1202.3,444.2L1202.1,442.1L1197.1,440.1L1191.7,436.1L1177.8,431.3L1173.9,432.8L1170.4,435.3L1169.0,433.7L1168.4,429.6L1164.3,428.4L1161.0,429.5ZM1203.5,443.1L1208.7,443.1L1212.4,440.8L1213.2,437.8L1210.9,437.7L1203.0,441.3ZM1221.7,444.6L1222.1,444.2L1221.1,442.2L1218.4,440.1L1219.9,443.7ZM1231.4,448.5L1231.6,447.9L1223.0,444.2L1225.6,447.0ZM1233.4,447.9L1233.1,448.3L1235.3,451.1L1235.4,450.7ZM1145.9,451.4L1149.6,450.2L1151.7,448.0L1148.2,448.1L1144.4,449.9L1141.8,452.9L1143.5,453.1ZM1233.8,452.2L1234.0,451.6L1230.7,450.2L1232.2,451.9ZM1158.9,456.7L1160.7,457.0L1162.1,455.4L1158.7,455.2ZM1249.0,466.5L1249.9,464.7L1248.0,464.0L1247.9,464.4ZM1250.2,468.5L1251.4,467.4L1249.5,466.5L1249.3,466.8ZM1280.2,469.0L1281.2,467.0L1277.9,467.6L1278.0,468.0ZM1251.8,471.6L1253.1,470.9L1252.1,470.1L1251.8,470.3ZM1274.2,472.1L1277.5,472.4L1277.9,470.3L1274.3,470.1ZM1247.5,482.4L1249.2,482.4L1249.4,482.1L1245.6,478.7L1241.5,476.5L1243.5,479.9ZM1117.1,490.8L1116.7,491.2L1119.0,494.9L1122.6,505.8L1120.9,511.5L1123.6,513.1L1128.6,513.4L1133.6,510.7L1141.4,510.7L1148.4,506.8L1160.8,504.9L1168.2,508.0L1171.4,512.3L1172.8,512.9L1176.5,513.1L1177.5,509.9L1177.7,514.6L1174.2,514.5L1174.5,515.8L1176.9,516.0L1177.8,514.8L1180.8,514.9L1182.0,518.2L1185.0,520.9L1191.3,522.7L1194.5,521.0L1198.2,523.4L1201.3,520.7L1207.5,519.4L1208.1,515.6L1210.5,510.6L1215.0,503.5L1216.5,498.0L1216.2,494.3L1214.7,489.3L1206.3,481.7L1202.6,476.3L1198.5,473.6L1197.8,469.1L1196.0,463.9L1192.3,462.6L1191.6,458.8L1188.9,453.6L1186.3,459.3L1186.1,465.5L1184.2,470.1L1180.8,469.6L1172.0,463.9L1173.1,460.8L1175.2,457.2L1166.8,456.2L1164.4,455.2L1160.4,457.2L1158.4,459.2L1156.9,463.8L1154.5,463.8L1152.0,461.6L1148.1,462.1L1144.3,467.3L1141.9,469.7L1138.7,471.2L1137.0,474.3L1124.8,477.7L1119.0,480.7L1117.7,482.5L1117.5,487.5L1118.8,491.2ZM1265.6,523.4L1265.7,523.8L1268.7,525.9L1267.8,528.5L1269.6,529.5L1273.5,526.5L1274.0,524.1L1276.2,523.3L1277.7,519.7L1276.2,519.1L1272.0,519.1L1271.0,516.8L1268.5,517.2L1266.3,513.6L1263.1,511.5L1262.9,511.8L1263.9,513.8L1268.0,519.0L1267.5,521.7ZM1197.3,534.2L1200.9,534.0L1203.4,530.8L1203.1,527.0L1198.7,527.7L1194.0,526.8L1195.5,531.5ZM1252.2,534.8L1248.4,537.5L1247.6,540.1L1252.3,541.7L1255.4,541.7L1258.7,539.9L1259.9,536.0L1263.6,534.8L1264.6,532.8L1267.1,530.1L1267.3,527.9L1263.0,526.2L1261.7,527.1L1257.5,532.4ZM1250.1,543.1L1251.7,543.4L1252.3,542.0L1250.2,541.6Z"/><clipPath id="lc"><use href="#land"/></clipPath></defs>
<use href="#land" fill="#f9f6d8" stroke="#f9f5d4" stroke-width="6" stroke-linejoin="round" filter="url(#gl)" opacity="0.95"/>
<defs><path id="c0" d="M645.9,366.2L647.2,368.4L646.7,366.7ZM691.2,407.4L694.4,409.9L697.6,413.2L697.3,419.2L695.9,421.6L696.4,423.3L699.3,426.7L695.6,427.7L693.2,428.1L691.6,427.0L690.7,424.5L690.9,420.4L690.7,418.9L689.0,418.7L687.3,413.2L688.0,411.4L689.0,409.4ZM697.6,413.2L700.8,413.3L705.5,413.5L704.2,419.2L704.5,421.6L705.5,423.1L704.0,425.7L700.8,426.5L699.3,426.7L696.4,423.3L695.9,421.6L697.3,419.2ZM705.5,413.5L708.2,414.5L711.2,417.5L708.9,423.8L704.0,425.7L705.5,423.1L704.5,421.6L704.2,419.2ZM684.1,482.0L688.2,485.8L690.7,486.3L693.7,488.2L696.6,489.4L694.1,494.3L698.1,494.7L700.5,494.3L703.2,492.8L704.0,490.2L704.7,486.5L702.0,486.0L701.5,482.8L696.1,481.6L695.9,478.2L695.1,477.0L692.9,474.9L686.3,475.5L685.0,479.2ZM976.1,326.9L976.1,317.9L982.5,316.4L988.4,319.4L990.8,321.6L998.0,321.1L1000.9,322.8L1000.7,325.2L1001.9,327.3L1005.8,327.4L1008.0,326.7L1011.7,325.0L1013.0,324.5L1014.9,326.7L1018.1,328.1L1014.7,329.6L1011.7,327.9L1011.5,329.1L1008.8,328.1L1007.1,329.6L1004.1,331.8L1006.6,334.5L1005.1,336.9L1001.9,336.6L1002.1,335.0L996.2,332.7L991.8,330.1L990.6,327.4L986.1,326.7L985.9,324.7L982.5,323.3L978.5,326.9ZM967.3,325.8L971.1,324.5L974.6,326.9L976.1,326.9L978.5,326.9L982.5,323.3L985.9,324.7L986.1,326.7L990.6,327.4L991.8,330.1L996.2,332.7L1002.1,335.0L1001.9,336.6L997.7,337.2L997.0,339.1L993.8,340.2L992.5,341.7L988.9,340.8L988.6,338.3L986.6,338.3L984.2,336.2L979.0,334.4L973.1,336.3L970.9,336.6L970.9,332.8L968.7,330.6L970.4,328.6L968.2,327.2ZM1144.2,330.1L1145.8,331.1L1146.5,331.8L1145.1,334.7L1146.3,335.6L1148.5,335.6L1150.0,335.1L1154.0,333.5L1151.7,332.1L1152.0,330.6L1153.9,330.1L1157.4,328.1L1157.4,326.7L1159.7,324.5L1159.6,324.2L1157.6,322.9L1153.4,325.2L1150.5,325.7L1148.3,327.9ZM1065.4,377.1L1067.1,379.4L1070.0,382.6L1070.3,388.7L1073.0,389.3L1076.4,387.0L1077.4,386.5L1078.6,388.7L1078.9,392.3L1079.9,396.0L1080.9,399.2L1080.9,403.3L1081.8,400.9L1083.3,398.9L1082.1,394.8L1079.9,390.6L1080.9,387.9L1078.4,384.0L1078.9,382.3L1079.4,379.6L1083.1,378.2L1084.5,378.0L1087.1,375.1L1084.3,375.0L1082.3,373.5L1081.8,371.3L1078.3,369.1L1081.1,364.5L1080.9,360.4L1077.8,358.8L1076.7,360.8L1072.5,362.8L1071.0,366.2L1069.8,369.4L1067.8,369.1L1067.6,373.5L1066.1,374.0L1066.1,375.7ZM1185.2,434.0L1191.6,436.4L1197.0,440.4L1201.9,442.3L1202.0,444.0L1199.9,444.2L1202.4,447.2L1206.1,451.1L1209.5,452.7L1206.1,453.1L1200.2,450.9L1197.5,447.5L1193.8,446.5L1191.3,448.0L1188.8,450.1L1185.2,449.9ZM1035.1,403.8L1038.1,406.7L1039.8,410.1L1038.1,412.6L1035.6,413.1L1034.6,410.6L1034.6,407.7ZM988.1,354.9L992.0,356.0L995.7,355.7L1001.4,354.7L1001.6,352.3L1005.6,350.4L1008.8,349.9L1009.3,347.2L1011.2,346.4L1010.5,344.7L1013.2,344.5L1014.4,341.8L1013.5,339.6L1016.6,337.7L1022.6,336.8L1018.6,336.3L1014.9,338.2L1014.2,335.2L1011.0,336.0L1009.3,337.2L1005.6,337.4L1005.1,336.9L1001.9,336.6L997.7,337.2L997.0,339.1L993.8,340.2L992.5,341.7L988.9,340.8L987.4,344.0L988.1,346.0L987.1,347.4L988.0,350.8L990.3,352.4ZM796.5,375.6L796.4,376.9L797.7,380.4L798.9,383.5L797.7,388.5L802.6,387.1L806.3,389.9L808.3,391.7L810.0,389.6L815.2,390.0L824.8,389.9L825.3,387.9L824.5,387.4L822.3,366.7L826.4,366.7L817.0,361.1L817.0,364.3L808.8,364.3L808.8,370.5L806.3,371.6L806.3,375.7ZM921.7,404.5L919.5,402.8L919.5,397.9L918.7,398.4L918.0,399.2L914.6,403.9L909.6,404.3L907.2,404.9L903.5,404.4L899.8,402.6L897.1,406.5L900.3,408.7L903.2,411.6L905.7,415.0L908.2,417.2L910.9,417.0L914.1,419.2L917.0,418.9L920.7,418.6L921.9,417.5L925.1,416.7L926.6,416.5L925.1,414.5L921.9,413.1L919.5,408.7L922.2,407.2ZM944.7,399.8L949.0,402.3L953.9,400.6L958.8,400.1L964.5,398.9L964.0,402.3L962.5,405.7L960.8,409.4L956.4,416.7L951.5,421.8L949.7,422.8L945.3,426.7L940.6,431.7L939.2,429.8L939.2,420.9L941.6,417.7L945.3,416.0L949.0,415.5L956.4,408.2L953.9,408.2L946.5,405.9L943.3,403.3L944.1,401.8L943.6,401.0ZM959.6,457.0L962.5,465.3L960.8,469.2L958.8,475.3L956.1,482.6L954.2,488.6L949.5,490.2L946.5,488.7L944.8,481.9L947.8,476.3L946.5,470.4L949.0,466.7L953.9,465.0L957.1,460.9ZM867.2,469.8L867.3,466.7L868.3,464.8L871.3,458.4L872.2,453.8L870.8,449.2L868.7,442.6L870.8,442.0L879.1,442.1L880.1,445.3L886.0,447.2L886.3,444.8L891.9,445.5L892.2,450.9L893.2,455.0L897.3,454.5L897.3,459.4L892.4,459.4L892.4,467.2L895.9,470.6L890.9,471.5L883.6,470.2L872.7,470.2L871.5,469.2ZM867.8,439.9L868.3,441.9L870.3,438.9L869.3,438.4ZM874.0,415.7L874.5,413.1L876.4,409.4L879.6,409.2L883.8,408.2L885.0,405.7L890.0,404.0L894.6,401.1L896.1,405.7L897.1,406.5L900.3,408.7L903.2,411.6L905.7,415.0L900.5,415.5L898.3,415.3L894.6,416.0L893.4,417.7L886.3,415.3L884.1,417.2L884.1,419.2L878.9,419.9L877.9,422.3L875.7,418.4ZM873.0,395.7L875.0,397.2L875.4,403.3L872.5,404.3L876.4,409.4L879.6,409.2L883.8,408.2L885.0,405.7L890.0,404.0L894.6,401.1L894.6,399.9L892.4,396.8L893.6,393.3L894.6,389.4L897.3,389.4L897.3,380.1L877.7,370.5L875.2,371.6L876.4,376.5L876.4,386.5L871.8,392.3L871.5,394.3ZM848.8,381.0L852.6,380.2L856.8,376.8L867.8,370.4L871.5,371.1L873.2,372.6L875.2,371.6L876.4,376.5L876.4,386.5L871.8,392.3L871.5,394.3L869.0,395.7L864.6,395.0L860.4,396.3L857.5,395.2L855.3,396.0L851.8,393.8L848.4,394.8L847.2,399.2L845.2,397.4L843.7,397.4L843.7,398.7L840.8,395.0L838.8,391.3L841.7,390.4L846.9,390.1L848.6,386.7ZM779.3,388.7L780.5,388.9L780.2,391.1L779.0,390.9ZM1274.5,470.4L1277.7,470.4L1277.4,472.1L1274.5,471.9ZM1278.1,467.7L1281.1,467.2L1280.1,468.7ZM1248.1,464.3L1249.6,464.8L1249.1,466.3ZM1249.6,466.7L1251.1,467.5L1250.3,468.2ZM1252.1,470.4L1252.8,470.9L1252.1,471.4Z"/><path id="c1" d="M777.9,267.7L780.2,267.2L782.5,266.4L784.6,265.6L786.6,265.9L789.1,266.4L791.3,265.6L794.0,266.1L796.5,266.5L798.5,265.9L800.3,266.3L802.5,266.4L805.1,269.4L803.5,270.2L801.3,271.0L799.5,271.7L797.2,271.7L794.8,272.3L792.8,273.4L790.0,273.1L787.7,272.4L785.2,272.8L782.5,272.1L780.8,270.4L779.7,269.3ZM686.0,401.6L688.5,401.3L688.2,403.1L686.0,403.1ZM662.9,398.9L665.6,399.6L666.1,397.9L666.8,399.6L670.3,401.1L671.0,402.1L675.9,401.8L678.4,403.1L680.9,402.1L685.8,401.6L683.8,402.3L687.0,403.8L688.7,405.0L690.7,406.7L691.2,407.4L689.0,409.4L688.0,411.4L687.3,413.2L689.0,418.7L687.0,420.6L683.8,421.6L680.9,421.4L679.4,421.8L682.3,426.0L680.9,426.7L677.2,427.6L673.7,424.9L672.5,422.6L671.5,417.5L672.2,412.6L667.6,412.8L665.9,410.6L661.2,410.6L660.2,407.2L658.7,405.0L659.0,402.3L660.4,400.4ZM640.8,436.0L638.3,438.9L638.5,442.3L642.0,445.3L644.9,449.7L648.4,457.0L650.6,461.6L653.8,465.5L660.0,469.2L665.1,472.5L667.3,470.4L668.3,467.2L667.6,465.8L668.3,464.8L667.6,463.8L668.8,462.3L668.8,458.7L669.3,458.2L667.3,454.4L664.6,454.5L664.6,450.9L660.4,450.9L658.2,450.6L656.3,445.8L657.0,444.5L658.5,443.6L659.0,440.1L664.1,438.1L666.2,437.9L666.0,434.3L661.7,433.1L658.2,432.1L655.3,428.9L653.1,427.9L652.3,431.4L650.1,433.8L646.4,435.0L645.2,437.5L644.0,439.9L642.7,438.7L640.4,437.7ZM667.3,470.4L668.6,474.1L669.8,476.5L670.5,480.2L671.3,483.3L673.0,483.3L675.2,480.9L678.4,481.6L680.1,483.5L681.1,481.4L684.1,482.0L685.0,479.2L686.3,475.5L692.9,474.9L695.1,477.0L695.3,476.0L696.1,474.1L696.9,472.1L694.6,469.7L694.9,467.5L690.2,467.5L689.5,464.5L689.5,461.4L686.3,460.6L683.3,458.4L679.9,458.2L677.7,456.2L677.4,451.4L674.5,451.9L671.0,453.8L667.3,454.4L669.3,458.2L668.8,458.7L668.8,462.3L667.6,463.8L668.3,464.8L667.6,465.8L668.3,467.2ZM696.6,501.4L695.1,506.8L694.6,510.4L696.1,511.9L700.0,512.9L703.2,513.0L706.0,511.6L706.9,510.0L706.7,507.0L704.2,504.6L701.5,503.0L698.6,501.4ZM665.1,472.5L665.4,476.5L665.1,485.0L664.6,491.1L662.4,498.5L662.2,503.3L662.2,508.2L659.7,514.3L658.2,518.0L657.0,521.6L657.7,525.3L656.8,529.7L655.5,533.8L653.8,537.5L652.3,541.6L655.0,544.8L652.6,548.5L653.1,552.1L655.5,555.8L657.5,557.8L662.9,559.2L663.9,557.4L665.4,556.0L667.6,555.6L670.0,555.4L666.1,554.6L661.4,554.6L660.4,551.4L658.0,549.7L657.5,547.7L660.4,544.8L661.2,542.4L661.9,537.5L661.9,532.6L661.7,527.7L663.1,522.9L665.1,518.0L666.1,513.1L666.6,509.0L664.9,504.6L666.3,500.9L668.1,496.0L670.3,493.6L669.8,488.7L672.7,486.3L671.3,483.3L670.5,480.2L669.8,476.5L668.6,474.1L667.3,470.4ZM892.8,309.6L893.8,307.9L894.1,306.9L897.6,304.5L896.4,302.0L899.8,301.1L906.0,302.0L913.3,302.5L916.5,300.6L921.4,300.0L922.9,301.3L925.9,304.7L931.8,305.9L936.9,306.7L936.0,310.9L932.3,312.8L928.1,313.8L924.4,315.0L925.1,317.2L928.3,316.9L925.4,317.9L921.9,319.4L920.5,319.0L918.2,317.0L921.2,315.2L918.5,314.0L915.8,314.0L913.9,314.2L911.2,317.0L907.7,316.8L912.3,314.5L911.9,313.5L910.1,310.8L906.2,309.5L903.7,310.0L899.6,311.2L894.6,310.6ZM903.7,310.0L906.2,309.5L910.1,310.8L911.9,313.5L912.3,314.5L907.7,316.8L907.4,314.0L904.7,310.8ZM896.1,296.1L901.0,295.2L903.7,291.9L907.5,290.7L914.3,292.0L914.1,294.0L918.7,297.3L916.5,300.6L913.3,302.5L906.0,302.0L899.8,301.1L896.4,302.0L896.5,300.6L897.1,299.1ZM890.1,290.9L890.0,288.6L891.4,287.3L893.9,286.8L895.4,288.6L897.6,288.5L898.1,286.5L902.3,286.5L905.6,287.3L907.5,290.7L903.7,291.9L899.6,290.1L894.4,290.1ZM1053.1,307.9L1047.9,306.7L1042.5,303.3L1035.1,303.7L1027.7,297.6L1026.5,295.5L1019.1,295.9L1013.0,295.5L1010.5,292.8L999.4,294.5L989.6,296.7L988.4,299.6L989.8,302.5L985.4,304.2L974.8,304.0L967.5,302.0L963.0,301.6L957.6,304.2L953.4,307.4L953.9,309.8L957.1,311.8L959.3,314.7L964.3,313.0L968.7,314.0L968.7,317.2L963.8,317.9L962.0,318.9L964.3,321.2L967.5,323.3L967.3,325.8L971.1,324.5L974.6,326.9L976.1,326.9L976.1,317.9L982.5,316.4L988.4,319.4L990.8,321.6L998.0,321.1L1000.9,322.8L1000.7,325.2L1001.9,327.3L1005.8,327.4L1008.0,326.7L1011.7,325.0L1013.0,324.5L1013.0,323.8L1019.1,322.8L1022.1,322.3L1025.3,323.0L1032.6,323.3L1035.6,324.7L1037.1,322.3L1036.1,318.6L1041.5,316.9L1042.5,312.5L1048.6,312.8L1049.1,309.6ZM1054.3,307.8L1058.5,306.2L1065.8,303.7L1070.8,305.5L1079.4,305.7L1081.6,300.6L1089.2,302.5L1090.5,304.7L1100.3,305.0L1104.0,307.2L1111.4,307.4L1120.0,305.2L1125.4,306.1L1122.7,310.6L1123.7,310.8L1128.6,310.7L1133.3,313.8L1125.1,314.7L1122.4,316.9L1117.8,318.4L1113.6,317.7L1113.8,320.8L1108.9,323.6L1102.8,324.2L1096.6,326.2L1088.7,324.0L1084.3,323.8L1075.4,323.4L1073.0,319.6L1068.3,318.1L1062.2,317.4L1060.9,311.8L1056.0,310.1ZM952.7,356.7L954.9,354.5L956.3,354.5L957.4,358.0L955.6,358.2ZM943.6,387.7L944.8,385.0L947.5,385.2L952.2,385.6L953.9,386.3L956.9,383.3L959.1,382.3L966.2,381.3L968.9,387.1L966.7,389.6L959.1,393.3L954.9,394.5L950.0,396.0L945.3,396.8L944.6,395.2L943.6,391.6ZM963.3,367.3L964.3,364.0L965.2,364.7L965.2,367.7ZM832.9,342.1L835.8,340.6L842.0,338.6L845.7,337.9L850.6,337.9L856.8,337.3L859.5,337.7L858.7,341.6L858.5,343.3L856.8,345.2L858.7,348.4L860.6,349.4L861.7,353.9L862.7,358.6L861.4,363.8L862.9,367.2L866.7,368.4L867.8,370.4L856.8,376.8L852.6,380.2L848.8,381.0L846.4,381.3L845.9,379.6L842.7,378.2L841.3,376.6L826.4,366.7L817.0,361.1L817.0,360.2L817.0,357.7L821.1,355.7L826.0,354.5L829.4,352.8L830.9,350.4L835.3,349.1L834.1,346.4L833.9,344.0ZM866.7,346.8L870.8,347.4L875.7,348.6L876.9,351.1L881.3,352.3L885.0,353.8L887.5,352.3L887.7,349.4L891.4,347.4L895.1,348.2L900.2,350.5L899.6,353.3L899.8,356.5L899.8,374.0L899.8,378.9L897.3,378.9L897.3,380.1L877.7,370.5L875.2,371.6L873.2,372.6L871.5,371.1L867.8,370.4L866.7,368.4L862.9,367.2L861.4,363.8L862.7,358.6L861.7,353.9L863.4,352.3L863.6,350.4L866.6,348.2ZM929.1,374.0L929.8,376.5L929.8,379.9L933.0,383.8L930.3,386.0L928.1,391.1L928.0,392.8L927.1,396.7L924.6,398.9L924.2,401.1L922.7,401.8L921.7,404.5L919.5,402.8L919.5,397.9L918.7,398.4L918.0,399.2L914.6,403.9L909.6,404.3L907.2,404.9L903.5,404.4L899.8,402.6L897.1,406.5L896.1,405.7L894.6,401.1L894.6,399.9L892.4,396.8L893.6,393.3L894.6,389.4L897.3,389.4L897.3,380.1L897.3,378.9L899.8,378.9L899.8,374.0ZM928.0,392.8L931.5,391.6L934.2,392.1L938.7,393.3L942.6,397.3L941.1,400.9L943.6,401.0L944.1,401.8L943.3,403.3L946.5,405.9L953.9,408.2L956.4,408.2L949.0,415.5L945.3,416.0L941.6,417.7L939.2,418.1L936.2,418.3L933.0,418.9L929.1,417.0L926.6,416.5L925.1,414.5L921.9,413.1L919.5,408.7L922.2,407.2L921.7,404.5L922.7,401.8L924.2,401.1L924.6,398.9L927.1,396.7ZM940.6,431.7L937.2,434.3L935.7,437.6L934.7,439.2L931.0,436.5L930.8,435.0L921.9,430.1L921.9,427.0L923.2,425.0L924.4,423.3L921.9,417.5L925.1,416.7L926.6,416.5L929.1,417.0L933.0,418.9L936.2,418.3L939.2,418.1L939.2,420.9L939.2,429.8ZM934.7,439.2L933.7,442.3L935.0,444.3L935.5,448.4L936.2,452.1L937.8,453.3L933.0,455.5L928.1,456.2L924.2,455.9L923.4,454.5L922.7,451.4L919.5,450.6L918.2,450.1L914.6,448.7L912.8,445.0L910.9,442.3L910.6,438.7L914.1,435.8L913.3,433.6L914.1,430.1L913.3,430.3L921.9,430.1L930.8,435.0L931.0,436.5ZM878.8,497.5L875.6,492.7L874.0,486.3L874.0,483.6L871.3,478.5L867.2,469.8L871.5,469.2L872.7,470.2L883.6,470.2L890.9,471.5L895.9,470.6L900.4,471.1L898.6,471.6L895.6,471.6L890.0,472.4L890.0,481.4L887.5,481.4L887.5,488.2L887.5,497.0L883.1,498.2L881.1,497.7ZM887.5,488.2L887.5,481.4L890.0,481.4L890.0,472.4L895.6,471.6L898.6,471.6L900.4,471.1L902.8,475.5L906.4,477.7L907.2,480.4L910.6,481.9L907.9,482.8L904.5,485.5L901.0,490.4L894.9,489.4L893.9,491.4L889.5,493.1ZM868.7,442.6L868.3,441.9L870.3,438.9L873.7,439.7L877.4,437.5L878.2,433.1L881.8,429.2L882.8,422.3L884.1,419.2L884.1,417.2L886.3,415.3L893.4,417.7L894.6,416.0L898.3,415.3L900.5,415.5L905.7,415.0L908.2,417.2L910.9,417.0L914.1,419.2L915.3,422.3L911.4,426.0L911.1,431.1L910.1,431.8L909.6,434.3L910.1,435.8L910.6,438.7L910.9,442.3L912.8,445.0L914.1,447.7L908.7,450.4L908.2,456.6L911.6,457.3L911.6,460.4L909.6,460.4L908.2,458.2L904.5,456.9L900.5,456.0L897.3,454.5L893.2,455.0L892.2,450.9L891.9,445.5L886.3,444.8L886.0,447.2L880.1,445.3L879.1,442.1L870.8,442.0ZM979.3,476.5L980.5,477.0L979.8,477.7ZM1241.7,476.7L1245.4,478.9L1249.1,482.1L1247.6,482.1L1243.7,479.7Z"/><path id="c2" d="M550.2,348.3L555.9,348.4L565.1,351.3L572.1,351.3L572.1,350.2L576.3,350.2L580.0,352.8L581.2,355.5L584.4,356.9L586.1,355.2L588.9,355.0L591.3,357.9L593.5,360.6L594.5,363.3L599.2,364.4L598.0,369.1L597.7,372.8L598.9,376.5L601.9,380.6L602.4,381.6L605.8,383.3L613.2,382.6L615.7,379.4L616.2,376.5L623.0,375.2L624.8,376.0L623.0,380.1L621.1,382.6L619.0,383.8L619.0,384.3L614.4,384.3L614.4,385.7L615.9,388.4L612.7,388.4L611.5,390.4L611.5,392.3L607.1,388.2L604.6,388.4L598.5,388.9L592.3,386.5L586.9,384.0L581.2,381.1L578.8,377.9L578.8,375.2L576.3,370.8L572.6,366.7L568.9,363.0L565.2,359.4L562.0,355.7L560.3,351.6L555.9,350.1L556.1,352.5L559.1,356.9L562.0,360.6L564.5,364.3L567.0,368.4L569.2,370.8L567.9,371.8L567.0,370.6L562.3,366.7L559.1,362.6L555.4,360.1L557.4,359.6L555.9,356.9L552.9,353.3ZM646.7,410.1L647.9,413.1L647.6,417.9L648.9,418.2L645.2,421.6L644.2,424.3L646.9,425.7L650.1,427.1L653.1,427.9L655.3,428.9L658.2,432.1L661.7,433.1L666.0,434.3L666.2,437.9L667.6,430.4L666.1,426.5L668.3,426.2L666.6,423.6L673.2,424.8L673.7,424.9L672.5,422.6L671.5,417.5L672.2,412.6L667.6,412.8L665.9,410.6L661.2,410.6L660.2,407.2L658.7,405.0L659.0,402.3L660.4,400.4L662.9,398.9L662.8,397.4L661.9,397.3L658.7,399.6L655.8,400.1L653.8,401.1L652.3,402.3L652.1,404.8L649.4,406.7L649.1,408.2L648.0,406.6ZM671.3,483.3L673.0,483.3L675.2,480.9L678.4,481.6L680.1,483.5L681.1,481.4L684.1,482.0L688.2,485.8L690.7,486.3L693.7,488.2L696.6,489.4L694.1,494.3L698.1,494.7L700.5,494.3L703.2,492.8L704.0,490.2L706.4,491.6L706.0,493.9L703.0,495.5L700.5,497.2L696.6,501.4L695.1,506.8L694.6,510.4L694.6,512.1L697.3,513.6L697.8,516.3L698.8,517.7L696.6,520.4L693.2,522.1L688.2,522.9L685.3,522.4L685.5,526.5L683.8,527.7L678.4,527.3L678.4,530.7L681.8,531.4L679.6,532.6L677.7,536.3L676.9,537.5L672.2,539.9L672.2,541.4L675.9,542.9L676.4,544.6L672.2,548.0L669.8,550.4L668.6,553.6L670.0,555.4L666.1,554.6L661.4,554.6L660.4,551.4L658.0,549.7L657.5,547.7L660.4,544.8L661.2,542.4L661.9,537.5L661.9,532.6L661.7,527.7L663.1,522.9L665.1,518.0L666.1,513.1L666.6,509.0L664.9,504.6L666.3,500.9L668.1,496.0L670.3,493.6L669.8,488.7L672.7,486.3ZM888.1,315.1L890.5,314.5L892.4,312.0L894.6,310.6L899.6,311.2L903.7,310.0L904.7,310.8L907.4,314.0L907.7,316.8L911.2,317.0L908.7,320.9L904.7,320.0L901.0,321.2L894.1,319.9L893.5,318.6L890.9,318.3L891.3,317.4ZM917.8,342.2L919.5,341.4L923.4,340.6L921.7,342.3L919.5,343.3ZM890.1,290.9L894.4,290.1L899.6,290.1L903.7,291.9L901.0,295.2L896.1,296.1L894.4,295.1L893.9,293.4L890.5,293.0ZM898.1,286.5L898.6,285.3L896.1,284.4L895.9,283.3L899.1,282.5L902.3,282.3L907.2,282.6L905.7,284.0L906.2,286.5L905.6,287.3L902.3,286.5ZM892.2,285.4L895.6,284.7L894.9,285.9L892.4,286.2ZM1091.4,399.3L1089.7,397.9L1086.8,396.7L1086.5,395.0L1085.5,394.8L1084.3,395.2L1084.1,398.4L1082.5,402.1L1084.1,405.0L1085.0,407.4L1085.8,410.1L1088.7,411.6L1089.5,412.6L1087.0,413.8L1084.7,412.0L1083.6,410.9L1080.1,408.2L1080.1,405.7L1080.9,403.3L1081.8,400.9L1083.3,398.9L1082.1,394.8L1079.9,390.6L1080.9,387.9L1078.4,384.0L1078.9,382.3L1079.4,379.6L1083.1,378.2L1084.5,378.0L1085.5,380.1L1087.3,380.1L1086.8,385.0L1089.5,383.3L1090.7,383.9L1094.1,383.0L1096.0,387.4L1098.1,392.6L1097.1,392.8L1091.7,392.9L1090.2,394.5ZM1108.0,422.7L1108.2,425.3L1110.1,425.6L1113.8,424.3L1118.0,424.5L1120.7,422.8L1121.4,420.6L1122.9,417.2L1128.3,417.5L1127.8,419.6L1128.6,422.3L1131.0,425.3L1128.1,425.7L1127.3,427.7L1125.6,430.9L1124.4,433.8L1123.7,436.5L1120.2,437.7L1116.3,435.8L1113.1,435.0L1109.4,434.8L1108.9,431.4L1106.7,428.9L1106.4,426.5L1106.4,424.0ZM1072.7,414.2L1078.2,415.0L1081.1,418.4L1085.0,421.6L1088.7,423.6L1092.7,426.5L1093.6,430.1L1096.4,433.3L1099.3,435.5L1098.8,441.9L1097.3,442.0L1094.9,441.1L1090.0,437.2L1085.3,430.1L1081.3,423.6L1076.9,419.6L1073.2,416.2ZM1161.2,429.8L1164.2,428.7L1168.2,429.8L1168.7,433.8L1170.4,435.8L1174.1,433.1L1177.8,431.6L1185.2,434.0L1185.2,449.9L1181.5,447.5L1177.0,448.2L1179.5,445.3L1177.8,441.1L1171.6,438.4L1166.7,437.2L1165.0,437.5L1163.0,434.8L1167.2,433.3L1163.0,432.6L1160.3,431.1ZM957.7,354.6L956.4,353.4L955.6,352.1L956.0,350.1L951.7,347.2L950.0,344.7L952.0,342.1L950.0,339.9L948.5,337.1L942.6,337.1L939.7,338.9L940.1,340.8L939.2,343.8L933.7,346.2L934.7,349.3L937.7,349.9L941.9,351.8L948.3,356.5L952.7,356.7L954.9,354.5L956.3,354.5ZM965.2,368.5L967.7,371.7L973.8,372.4L974.1,372.3L975.6,369.1L976.8,366.9L976.3,364.1L972.9,367.2L967.7,368.7ZM844.9,412.2L846.7,412.1L850.6,413.5L853.1,417.2L855.5,417.0L859.2,416.1L860.9,412.1L863.4,410.6L866.1,411.6L867.8,409.4L872.0,401.1L874.2,399.6L873.2,397.4L873.0,395.7L871.5,394.3L869.0,395.7L864.6,395.0L860.4,396.3L857.5,395.2L855.3,396.0L851.8,393.8L848.4,394.8L847.2,399.2L847.6,401.6L845.2,405.5L845.1,408.7Z"/><path id="c3" d="M711.2,417.5L712.6,418.2L715.3,423.3L715.3,427.7L716.5,428.2L719.0,429.4L720.2,429.4L725.1,430.4L728.8,433.3L729.6,434.0L735.0,434.5L739.9,434.8L743.6,436.7L746.8,439.4L751.5,440.4L752.4,443.6L752.7,446.0L752.2,449.7L748.8,453.3L746.5,455.8L743.6,459.4L742.4,464.3L742.1,470.4L740.6,472.8L739.2,477.2L737.4,480.9L735.0,483.6L731.3,483.8L727.6,485.3L724.2,486.3L720.2,489.4L718.7,492.4L718.7,496.0L716.5,498.5L714.6,502.1L711.6,505.3L709.1,508.0L706.9,510.0L706.7,507.0L704.2,504.6L701.5,503.0L698.6,501.4L696.6,501.4L700.5,497.2L703.0,495.5L706.0,493.9L706.4,491.6L704.0,490.2L704.7,486.5L702.0,486.0L701.5,482.8L696.1,481.6L695.9,478.2L695.1,477.0L695.3,476.0L696.1,474.1L696.9,472.1L694.6,469.7L694.9,467.5L690.2,467.5L689.5,464.5L689.5,461.4L686.3,460.6L683.3,458.4L679.9,458.2L677.7,456.2L677.4,451.4L674.5,451.9L671.0,453.8L667.3,454.4L664.6,454.5L664.6,450.9L660.4,450.9L658.2,450.6L656.3,445.8L657.0,444.5L658.5,443.6L659.0,440.1L664.1,438.1L666.2,437.9L667.6,430.4L666.1,426.5L668.3,426.2L666.6,423.6L673.2,424.8L673.7,424.9L677.2,427.6L680.9,426.7L682.3,426.0L679.4,421.8L680.9,421.4L683.8,421.6L687.0,420.6L689.0,418.7L690.7,418.9L690.9,420.4L690.7,424.5L691.6,427.0L693.2,428.1L695.6,427.7L699.3,426.7L700.8,426.5L704.0,425.7L708.9,423.8ZM713.3,428.2L716.5,427.9L719.0,428.4L718.3,431.1L714.1,431.6ZM816.5,325.5L816.9,327.7L816.4,329.6L815.2,331.6L814.9,333.1L816.7,334.0L816.7,335.2L816.2,337.4L818.9,337.4L820.1,336.9L819.8,336.2L821.1,334.5L820.3,334.5L821.1,332.5L819.8,331.0L821.1,330.8L821.3,329.6L821.3,327.7L823.0,326.2L822.1,325.3L818.3,325.1ZM873.2,296.2L878.2,295.2L883.3,294.0L884.3,295.0L886.6,294.8L894.4,295.1L896.1,296.1L897.1,299.1L896.5,300.6L896.4,302.0L897.6,304.5L894.1,306.9L893.8,307.9L890.0,307.2L887.7,307.7L884.7,306.9L881.8,305.5L879.9,304.7L878.4,304.1L875.2,303.5L874.6,302.0L874.5,300.6L873.1,298.9L873.7,297.6ZM868.1,305.0L870.2,304.7L873.5,303.3L875.2,303.5L878.4,304.1L879.9,304.7L881.8,305.5L884.7,306.9L882.6,308.3L880.6,308.5L880.0,309.1L875.2,308.1L875.0,308.8L872.4,308.8L869.0,305.9ZM886.6,294.8L894.4,295.1L893.9,293.4L890.5,293.0L887.5,293.6ZM865.9,283.5L863.6,283.7L860.4,285.0L858.0,285.9L855.5,286.2L852.1,284.0L850.8,280.6L850.5,276.7L850.8,275.9L854.3,274.7L859.2,272.5L861.7,272.3L865.4,269.3L868.6,266.7L873.7,263.5L875.2,261.3L878.9,260.3L882.6,257.9L885.0,257.8L890.0,256.4L896.6,255.2L901.8,254.1L907.2,254.6L914.8,256.0L912.1,257.6L914.1,257.4L909.4,259.2L910.4,258.6L906.9,256.7L902.3,257.1L901.8,258.1L901.5,259.3L899.6,260.4L896.6,259.9L893.4,260.1L888.9,259.2L887.5,260.8L882.8,260.6L877.9,263.5L874.0,266.4L872.0,270.2L873.0,270.8L868.1,272.8L868.3,277.2L869.9,278.0L868.8,278.9L869.0,280.8L867.3,281.7ZM865.9,283.5L866.1,285.4L867.6,286.9L869.3,290.6L870.3,292.5L873.6,292.2L874.5,290.8L876.7,290.7L878.6,289.4L879.1,286.7L880.1,284.5L882.8,283.0L884.8,281.8L880.6,279.6L880.9,275.7L883.8,274.0L888.2,272.0L891.2,269.1L892.9,267.6L897.7,267.1L896.6,265.4L897.1,263.0L896.1,262.0L892.4,260.6L888.9,259.2L887.5,260.8L882.8,260.6L877.9,263.5L874.0,266.4L872.0,270.2L873.0,270.8L868.1,272.8L868.3,277.2L869.9,278.0L868.8,278.9L869.0,280.8L867.3,281.7ZM882.8,288.1L884.5,286.4L885.3,286.7L884.3,288.1L883.1,288.7ZM878.6,290.3L880.4,287.9L879.9,289.1ZM897.7,267.1L900.8,269.1L898.6,270.6L893.6,272.8L891.2,273.7L890.7,276.7L890.9,279.8L893.2,280.2L894.8,281.7L899.8,280.9L906.7,280.1L909.6,278.4L912.1,276.9L915.8,274.2L912.1,272.3L913.3,271.1L911.4,269.6L911.9,266.7L909.6,264.5L912.1,262.5L908.4,261.3L909.4,259.2L910.4,258.6L906.9,256.7L902.3,257.1L901.8,258.1L901.5,259.3L899.6,260.4L896.6,259.9L893.4,260.1L888.9,259.2L892.4,260.6L896.1,262.0L897.1,263.0L896.6,265.4ZM914.1,257.4L919.5,258.4L926.9,259.1L939.2,262.5L939.7,264.7L936.7,266.2L933.0,266.4L924.4,265.4L918.2,264.0L923.2,267.1L923.9,270.3L929.3,271.8L931.8,271.5L929.3,269.1L928.8,268.6L936.0,270.1L937.9,270.1L936.7,267.9L941.6,265.7L947.0,266.7L946.5,264.2L944.8,260.3L951.5,260.8L952.7,262.3L950.2,264.2L953.9,264.5L957.6,262.5L966.2,260.8L972.4,261.3L979.8,260.1L987.1,259.3L987.1,257.4L997.0,258.6L1001.9,260.6L1005.6,261.0L1003.1,258.1L1002.6,254.9L1004.4,253.2L1008.0,249.8L1010.5,248.8L1016.6,250.1L1017.1,253.2L1015.4,259.3L1017.9,263.0L1019.8,261.8L1019.1,258.1L1020.3,254.5L1019.1,252.0L1022.8,250.1L1029.0,251.3L1036.3,248.4L1049.9,246.7L1052.3,244.5L1064.6,242.3L1079.4,241.0L1094.9,238.1L1101.5,239.8L1113.8,241.0L1117.5,243.5L1108.9,247.1L1116.3,247.6L1128.6,248.8L1140.9,247.9L1148.3,247.6L1155.6,250.1L1154.4,252.5L1160.6,254.9L1165.5,253.2L1175.3,253.5L1182.7,250.8L1185.2,250.3L1197.5,251.3L1207.3,253.0L1214.7,254.7L1224.5,254.5L1231.9,257.6L1241.7,257.6L1251.6,257.1L1258.0,256.7L1259.0,258.9L1263.9,257.4L1273.7,258.1L1281.1,259.6L1281.1,269.1L1277.4,270.1L1274.9,269.8L1279.4,274.2L1279.1,275.7L1267.6,276.9L1261.4,278.9L1257.2,281.3L1246.7,280.6L1241.7,281.5L1240.0,286.2L1236.8,286.7L1239.8,290.6L1236.8,294.0L1231.9,297.9L1228.7,298.4L1227.7,300.8L1223.8,303.5L1221.1,298.4L1220.8,293.5L1222.1,288.6L1227.0,285.7L1231.9,282.5L1239.3,277.6L1241.7,275.2L1233.1,278.9L1232.6,276.7L1223.8,277.6L1218.4,282.5L1209.3,282.5L1203.6,283.0L1196.2,282.8L1190.1,283.0L1183.9,286.7L1177.8,289.8L1175.3,295.9L1181.5,295.5L1186.1,297.9L1185.2,300.8L1183.9,305.7L1183.4,309.4L1179.0,314.2L1172.9,319.1L1165.5,323.5L1162.8,322.5L1159.7,324.5L1159.6,324.2L1161.1,321.6L1160.6,318.1L1163.0,317.4L1165.7,317.7L1167.9,312.3L1169.8,309.7L1164.2,311.3L1160.6,311.3L1158.1,308.4L1152.0,306.2L1152.0,305.0L1148.3,299.1L1142.1,297.0L1136.0,297.6L1133.5,299.1L1135.2,300.8L1131.0,305.7L1128.1,306.9L1125.4,306.1L1120.0,305.2L1111.4,307.4L1104.0,307.2L1100.3,305.0L1090.5,304.7L1089.2,302.5L1081.6,300.6L1079.4,305.7L1070.8,305.5L1065.8,303.7L1058.5,306.2L1054.3,307.8L1053.1,307.9L1047.9,306.7L1042.5,303.3L1035.1,303.7L1027.7,297.6L1026.5,295.5L1019.1,295.9L1013.0,295.5L1010.5,292.8L999.4,294.5L989.6,296.7L988.4,299.6L989.8,302.5L985.4,304.2L974.8,304.0L967.5,302.0L963.0,301.6L957.6,304.2L953.4,307.4L953.9,309.8L957.1,311.8L959.3,314.7L956.4,315.9L953.9,318.6L955.1,322.8L957.6,325.6L952.4,325.6L949.0,323.5L944.1,322.3L936.7,321.8L931.8,319.4L931.3,318.6L928.8,317.4L930.5,316.7L931.8,314.7L934.7,312.8L932.3,312.8L936.0,310.9L936.9,306.7L931.8,305.9L925.9,304.7L922.9,301.3L921.4,300.0L916.5,300.6L918.7,297.3L914.1,294.0L914.3,292.0L907.5,290.7L905.6,287.3L906.2,286.5L905.7,284.0L907.2,282.6L909.6,281.4L912.6,281.5L909.6,280.8L906.7,280.1L909.6,278.4L912.1,276.9L915.8,274.2L912.1,272.3L913.3,271.1L911.4,269.6L911.9,266.7L909.6,264.5L912.1,262.5L908.4,261.3L909.4,259.2ZM395.5,259.6L405.3,262.5L412.7,264.0L420.8,266.4L414.4,270.8L406.6,269.6L398.0,267.9L399.2,265.9L395.5,269.1ZM964.3,253.8L966.3,255.3L969.1,254.9L970.4,255.3L973.9,256.0L975.7,254.8L978.2,254.8L979.8,255.5L978.9,252.2L976.5,250.1L974.8,248.2L977.4,247.3L979.1,247.3L980.4,246.0L983.1,245.0L984.8,244.5L986.9,243.9L989.0,242.7L991.2,242.8L993.3,241.9L995.5,242.7L996.9,241.2L998.8,241.2L1001.5,241.3L1002.6,241.1L1005.0,239.7L1007.3,240.2L1004.1,240.4L1003.2,240.4L1000.9,239.3L998.5,240.1L996.4,240.5L993.7,240.9L991.6,240.7L990.1,240.5L988.2,241.0L985.7,241.5L983.8,242.2L981.3,243.2L980.2,242.5L978.0,243.7L975.6,244.6L974.3,245.1L973.2,247.3L970.7,248.9L969.3,249.2L968.5,251.0L966.6,252.2ZM1220.8,304.2L1222.6,304.0L1221.6,305.2ZM1201.2,317.2L1204.3,315.7L1202.4,317.4ZM1006.1,369.9L1006.8,371.1L1010.5,372.8L1007.9,373.4L1012.7,377.2L1015.7,376.0L1016.6,373.5L1017.4,376.5L1017.4,381.3L1018.6,386.2L1019.8,390.1L1022.3,396.2L1025.8,403.3L1029.1,408.0L1030.5,406.2L1033.4,405.0L1034.7,402.6L1034.7,398.9L1035.8,395.7L1035.3,390.4L1038.1,388.7L1040.8,387.0L1043.2,384.5L1048.6,379.6L1051.6,378.2L1052.3,375.5L1054.8,374.8L1057.5,374.8L1057.2,373.3L1056.7,371.1L1056.5,368.4L1055.0,367.4L1055.8,364.7L1055.9,363.3L1055.1,363.3L1052.3,363.0L1047.4,362.3L1044.9,360.8L1042.5,360.8L1037.6,358.6L1035.2,357.3L1036.1,355.0L1037.6,353.9L1032.6,351.6L1031.9,350.8L1032.6,348.4L1031.2,348.2L1033.9,347.2L1032.1,344.0L1029.7,341.1L1027.2,340.6L1027.7,342.3L1024.0,343.3L1020.3,343.0L1020.1,345.7L1021.6,347.7L1023.5,348.9L1021.8,351.8L1020.1,354.0L1018.9,354.7L1017.6,356.9L1015.9,359.1L1012.5,360.1L1011.5,359.4L1009.5,361.3L1010.7,362.8L1011.0,365.0L1012.7,368.4L1007.5,368.4ZM1006.1,369.9L1003.9,368.7L1002.9,367.2L1001.9,365.7L997.0,366.2L991.6,366.5L989.8,366.2L990.1,363.5L993.8,362.6L994.0,361.3L992.8,358.6L990.3,356.9L988.1,354.9L992.0,356.0L995.7,355.7L1001.4,354.7L1001.6,352.3L1005.6,350.4L1008.8,349.9L1009.3,347.2L1011.2,346.4L1010.5,344.7L1013.2,344.5L1014.4,341.8L1013.5,339.6L1016.6,337.7L1022.6,336.8L1022.8,337.4L1025.3,340.1L1029.7,341.1L1027.2,340.6L1027.7,342.3L1024.0,343.3L1020.3,343.0L1020.1,345.7L1021.6,347.7L1023.5,348.9L1021.8,351.8L1020.1,354.0L1018.9,354.7L1017.6,356.9L1015.9,359.1L1012.5,360.1L1011.5,359.4L1009.5,361.3L1010.7,362.8L1011.0,365.0L1012.7,368.4L1007.5,368.4ZM989.8,366.2L984.7,365.7L979.3,364.7L978.3,361.6L976.6,361.6L972.9,363.0L967.7,360.6L965.0,359.6L963.3,357.2L961.5,354.3L958.8,353.5L957.7,354.6L956.4,353.4L955.6,352.1L956.0,350.1L951.7,347.2L950.0,344.7L952.0,342.1L950.0,339.9L948.5,337.1L947.0,335.2L947.5,334.0L946.7,331.6L948.5,330.8L952.0,332.8L955.9,331.0L957.4,331.6L958.6,333.9L961.8,336.4L966.0,338.4L970.9,337.7L970.9,336.6L973.1,336.3L979.0,334.4L984.2,336.2L986.6,338.3L988.6,338.3L988.9,340.8L987.4,344.0L988.1,346.0L987.1,347.4L988.0,350.8L990.3,352.4L988.1,354.9L990.3,356.9L992.8,358.6L994.0,361.3L993.8,362.6L990.1,363.5ZM924.3,356.1L927.1,356.5L928.6,354.9L930.5,354.5L929.3,350.8L934.7,349.3L937.7,349.9L941.9,351.8L948.3,356.5L952.7,356.7L955.6,358.2L957.4,358.0L958.3,360.1L961.5,362.6L961.8,365.2L963.3,367.3L965.2,368.5L967.7,371.7L973.8,372.4L975.2,374.0L973.6,378.9L966.2,381.3L959.1,382.3L956.9,383.3L953.9,386.3L952.2,385.6L947.5,385.2L944.8,385.0L943.6,387.7L942.4,385.2L939.7,382.1L937.2,378.4L934.7,376.2L934.2,372.6L931.8,368.9L929.8,366.9L928.3,364.3L924.9,359.3L923.4,359.1ZM902.4,328.1L903.2,326.0L907.2,325.2L909.9,327.2L915.5,326.9L920.2,325.2L924.9,325.2L929.1,326.9L932.8,327.9L936.7,327.7L940.5,326.4L943.1,326.2L945.2,327.4L945.7,329.7L948.5,330.8L946.7,331.6L947.5,334.0L947.0,335.2L948.5,337.1L942.6,337.1L938.4,337.2L933.5,338.2L929.3,338.3L928.5,339.2L927.2,339.9L926.1,340.1L927.4,338.4L925.8,338.4L923.4,338.0L921.2,339.5L918.2,339.6L913.6,337.9L912.6,339.1L909.9,338.2L907.7,338.2L905.7,337.4L905.5,335.2L903.0,334.2L904.5,332.8L902.5,331.4L902.8,330.0L905.5,329.1L909.6,329.1L909.1,327.8L906.0,327.8L903.1,327.8ZM900.2,350.5L905.2,351.2L909.6,352.4L912.1,351.4L914.6,350.7L917.8,351.3L922.6,351.6L924.2,355.7L922.7,360.0L921.0,358.9L918.4,354.6L918.7,356.9L921.7,361.3L923.7,365.5L926.1,369.4L929.1,374.0L899.8,374.0L899.8,356.5L899.6,353.3ZM919.2,493.2L918.0,497.2L914.6,500.7L912.1,504.1L906.9,508.2L901.3,510.7L892.7,511.0L887.5,512.6L883.7,511.5L883.3,507.7L883.1,505.0L880.4,500.2L878.8,497.5L881.1,497.7L883.1,498.2L887.5,497.0L887.5,488.2L889.5,493.1L893.9,491.4L894.9,489.4L901.0,490.4L904.5,485.5L907.9,482.8L910.6,481.9L915.3,482.4L917.0,487.5L916.9,490.9L915.3,490.5L914.1,493.1L916.8,494.3L917.3,493.2Z"/><path id="c4" d="M833.9,321.8L835.3,318.9L835.6,316.4L835.3,315.0L832.9,312.8L831.2,311.7L827.5,310.8L826.5,309.6L829.7,308.6L834.4,309.0L833.6,306.4L835.3,307.2L838.5,306.9L842.0,305.5L842.2,303.5L844.6,303.0L846.2,304.0L848.6,305.7L850.1,305.7L852.6,306.8L854.0,306.9L858.5,308.1L857.0,311.6L855.5,312.0L853.3,314.5L853.1,315.1L855.0,314.7L855.5,315.7L854.8,317.7L855.5,319.9L856.8,320.8L855.3,321.7L853.6,322.7L850.6,321.9L848.1,321.6L845.7,322.5L845.9,324.1L842.7,324.1L840.0,323.3L837.1,323.3L834.9,322.7ZM859.5,324.2L861.4,322.8L861.8,325.0L860.9,326.7L859.5,325.5ZM833.9,321.8L829.0,321.7L823.8,321.3L818.6,320.9L815.5,322.8L816.5,325.5L818.3,325.1L822.1,325.3L823.0,326.2L821.3,327.7L821.3,329.6L821.1,330.8L819.8,331.0L821.1,332.5L820.3,334.5L821.1,334.5L819.8,336.2L820.1,336.9L821.3,336.9L822.6,338.2L822.8,338.6L824.5,339.9L827.5,338.2L832.9,338.0L834.4,336.4L836.6,336.0L837.1,334.2L838.8,333.1L837.6,331.3L840.0,328.4L843.7,326.7L846.2,325.5L846.4,324.5L845.9,324.1L842.7,324.1L840.0,323.3L837.1,323.3L834.9,322.7ZM844.2,331.1L845.9,330.2L846.7,331.1L845.7,331.8ZM844.6,303.0L846.7,302.3L848.9,302.3L850.6,302.2L852.6,302.8L852.3,303.7L853.3,304.0L854.0,305.0L853.3,305.5L854.3,306.2L854.0,306.9L852.6,306.8L850.1,305.7L848.6,305.7L846.2,304.0ZM861.9,311.7L863.4,312.3L865.4,312.0L868.3,311.6L870.3,311.8L869.8,310.2L871.5,309.2L872.4,308.8L875.0,308.8L875.2,308.1L880.0,309.1L880.4,310.5L878.6,312.0L877.9,313.4L875.2,314.0L872.0,314.2L868.8,313.8L868.3,312.9L865.4,313.5L864.0,313.3L861.7,312.8ZM796.7,358.4L798.7,357.9L798.0,359.4ZM803.1,359.4L804.4,357.4L805.1,357.9ZM974.1,478.9L975.6,479.2L974.8,479.9Z"/><path id="c5" d="M491.4,257.8L496.4,258.1L502.5,259.6L507.4,258.1L513.6,257.6L521.0,256.9L524.6,256.2L530.8,258.1L535.7,257.6L541.9,258.4L550.5,259.6L556.6,261.3L559.1,262.5L567.7,262.0L572.6,263.0L572.6,264.7L575.1,262.0L580.0,261.0L587.4,262.3L596.0,262.3L598.5,260.6L602.1,261.3L603.4,258.1L602.1,254.5L605.8,252.0L610.8,254.5L612.0,257.6L615.7,259.3L621.8,260.6L626.7,263.0L629.2,259.3L636.6,257.6L637.8,260.6L636.6,264.2L632.9,265.9L626.7,266.2L623.0,269.1L620.6,271.5L615.7,272.8L610.8,275.2L607.1,278.9L605.1,283.7L606.6,284.2L610.8,288.6L616.9,288.6L621.8,289.8L629.2,292.8L635.8,293.3L636.1,298.4L639.0,302.0L641.5,302.8L644.0,301.6L644.5,298.4L643.5,294.7L648.9,291.1L650.1,287.4L645.2,284.2L647.6,281.3L646.4,275.7L652.6,275.7L657.5,276.4L662.4,278.1L667.3,278.9L667.3,282.5L671.0,285.0L675.9,284.2L678.4,280.6L679.6,280.6L683.3,285.0L687.0,289.8L690.7,292.8L695.6,294.7L700.5,298.4L701.3,300.8L698.1,302.3L693.2,304.5L687.0,305.2L679.6,305.0L673.5,306.9L668.6,309.8L664.9,313.0L663.1,313.5L667.3,311.1L672.2,308.6L678.4,307.7L680.1,308.6L677.2,310.6L678.9,313.0L679.6,315.0L683.3,315.9L687.0,316.2L688.2,317.2L690.7,315.5L690.0,313.0L691.2,315.5L687.0,317.7L682.1,318.9L677.2,321.6L675.4,320.8L675.9,319.1L679.6,317.2L675.9,317.4L673.5,318.4L672.5,317.4L671.5,315.7L671.5,312.8L670.3,312.0L668.1,311.8L666.1,313.8L665.4,315.7L664.1,316.9L662.4,317.9L654.5,317.9L653.1,318.4L650.6,319.9L649.4,321.3L644.7,321.3L643.7,322.0L644.0,323.3L638.3,324.7L634.9,326.0L633.9,324.7L635.6,322.8L636.3,321.3L635.4,317.2L632.9,317.2L632.6,315.2L629.4,313.3L620.8,309.8L617.9,310.6L612.0,309.8L605.6,308.9L604.1,307.2L604.1,308.1L536.2,308.1L535.2,307.4L531.3,305.2L525.9,303.3L523.9,300.1L521.0,297.2L517.8,295.2L518.3,293.5L518.3,290.8L514.1,289.6L510.1,285.2L506.2,283.0L502.5,282.5L500.1,284.0L496.1,281.1L495.9,280.4L491.4,280.6ZM687.6,264.4L684.8,266.9L684.8,268.0L681.6,267.8L680.8,268.6L678.3,268.7L674.7,268.1L678.1,270.3L678.1,271.7L679.7,274.0L678.5,273.8L676.7,272.9L675.2,273.7L673.1,271.3L669.0,272.1L671.8,273.9L672.7,275.3L677.7,275.8L677.3,277.2L675.8,277.0L672.5,276.5L673.2,274.4L670.4,275.2L667.3,274.9L666.9,274.1L662.8,272.5L661.2,271.7L658.5,271.9L657.5,271.0L656.3,269.7L651.8,271.4L651.4,269.3L648.2,271.3L646.0,270.8L647.2,268.6L647.6,267.7L651.2,268.0L653.6,267.5L656.8,269.3L656.5,265.0L657.7,262.4L656.5,261.6L652.9,261.2L652.6,259.8L649.8,258.6L647.2,257.4L643.2,256.9L641.3,256.1L640.7,258.2L637.4,255.7L636.7,257.5L633.2,255.7L632.1,256.3L628.6,255.9L627.6,255.2L622.9,255.4L620.5,256.9L620.7,257.0L617.1,252.5L617.8,250.4L615.5,246.6L617.6,246.9L620.3,247.4L621.7,246.3L625.7,247.1L625.7,247.8L628.4,248.8L631.9,247.9L632.8,247.8L638.0,246.8L639.7,248.9L640.3,247.4L644.8,249.7L647.2,250.7L648.6,251.1L651.7,250.1L652.7,250.9L655.6,251.9L659.0,254.9L659.9,252.7L662.6,253.7L665.5,254.3L668.2,255.2L668.6,256.6L669.9,258.4L672.4,260.5L676.8,260.0L678.5,263.6L681.0,264.0L684.2,263.9L685.3,265.4ZM548.3,255.9L551.5,257.1L552.9,257.9L556.9,259.8L557.9,259.1L562.4,259.1L563.2,259.5L565.7,260.5L567.2,259.7L570.3,261.6L573.8,260.6L575.8,260.0L575.9,259.5L578.0,259.6L582.5,260.3L585.3,259.7L587.6,260.2L589.7,257.6L590.8,256.0L586.5,255.3L585.9,254.4L584.6,255.2L582.1,254.6L580.4,253.4L577.4,251.4L574.5,249.2L572.9,249.4L570.7,251.3L567.1,249.7L566.5,251.3L563.0,251.7L559.4,250.4L559.6,249.8L556.3,249.2L554.0,249.4L551.6,249.1L547.6,250.2L544.2,253.2L549.3,252.7L551.7,252.3L548.1,253.7ZM530.3,251.3L530.9,252.4L533.8,253.2L534.9,253.2L538.8,254.9L540.0,252.6L544.8,252.7L547.5,251.2L548.9,248.4L552.4,245.9L548.6,246.9L547.2,246.8L544.5,245.3L542.9,246.0L541.0,245.9L538.8,246.7L537.2,246.4L533.9,245.3L531.6,246.5L529.9,249.8ZM652.2,239.7L648.3,240.5L647.4,242.5L645.5,241.6L640.1,240.5L639.8,243.0L637.7,242.4L634.7,241.7L631.3,242.6L631.3,239.7L629.2,240.9L626.6,240.2L624.7,242.6L622.0,241.7L621.3,240.1L619.2,236.4L619.1,238.7L620.9,235.7L625.5,238.0L628.3,237.1L623.6,235.9L622.0,232.5L622.0,232.3L618.8,233.3L619.1,231.2L614.5,229.7L613.4,231.4L611.9,229.9L614.8,228.8L616.8,229.9L616.6,229.1L621.2,229.0L622.7,229.1L625.3,228.7L625.0,225.5L629.5,227.4L630.0,226.7L633.2,225.0L633.6,226.9L636.1,224.7L637.9,226.6L640.9,223.9L642.6,224.3L645.4,224.3L647.5,225.0L650.0,225.4L651.0,226.0L653.4,226.2L657.2,225.8L659.1,224.4L661.1,224.2L662.6,225.9L663.1,225.4L666.7,226.0L668.2,225.7L671.7,226.5L672.1,225.3L674.0,225.5L676.5,225.5L680.5,225.8L680.6,226.0L682.9,225.7L687.3,225.2L683.9,227.0L682.2,228.7L680.0,227.9L675.6,231.3L674.7,230.9L672.8,231.9L671.8,231.1L670.4,232.5L668.4,230.7L666.0,232.5L664.6,232.4L660.1,234.1L658.9,234.6L655.0,234.1L652.6,236.7L650.0,237.4L647.9,238.7L645.8,238.8L648.2,240.7ZM643.1,245.8L641.1,245.6L638.5,245.8L637.3,246.8L633.9,245.6L631.5,245.0L628.1,245.7L626.6,245.4L625.5,247.2L621.9,247.0L619.4,245.7L617.1,245.1L615.4,246.7L611.6,244.5L610.1,243.2L608.1,243.0L607.2,243.0L603.2,243.7L602.9,244.6L600.4,242.1L603.4,240.1L605.0,240.9L608.6,240.2L610.6,241.0L611.1,239.8L614.0,241.5L616.2,241.4L618.7,241.8L621.6,242.7L623.2,240.3L628.0,241.8L629.5,241.8L630.5,241.9L634.9,242.3L635.9,244.2L637.8,242.9L640.0,244.3ZM549.1,244.4L552.4,244.5L554.1,244.2L558.2,245.5L559.2,244.2L563.8,244.4L565.1,244.8L567.4,245.4L568.8,244.4L571.5,246.1L574.5,245.4L576.5,244.7L576.7,244.1L578.0,242.3L576.3,242.9L574.6,242.0L572.3,242.2L568.7,240.6L566.1,240.6L561.9,241.1L560.9,240.1L559.1,240.7L556.7,240.7L553.0,241.6L550.5,242.2L548.7,242.6ZM603.9,252.7L605.1,252.8L607.5,252.5L610.5,252.7L612.7,251.3L615.6,250.5L616.2,246.7L613.1,246.0L611.5,247.5L607.4,247.0L606.5,246.0L603.6,246.5L602.9,249.9ZM587.1,253.3L588.2,253.9L590.5,253.1L593.2,253.7L594.6,253.8L596.5,253.4L600.2,253.6L600.6,249.8L598.6,248.7L596.7,247.8L594.7,247.6L592.6,246.4L589.9,246.9L587.7,247.4L587.5,250.0L590.1,252.2L587.3,252.4ZM603.3,237.2L605.8,237.8L605.9,235.9L609.1,237.2L611.7,238.0L614.8,237.1L617.5,236.5L617.4,236.4L620.4,235.5L622.8,236.1L623.6,234.6L626.3,234.5L624.7,233.0L623.2,232.2L619.2,231.5L618.0,230.2L613.1,230.8L612.4,229.0L609.2,231.5L607.4,231.7L605.2,231.0L603.6,232.9L602.0,234.5ZM586.5,244.1L588.2,245.7L590.5,245.5L591.8,244.7L595.1,244.6L597.0,245.8L599.5,243.3L600.7,241.5L599.9,239.7L596.7,239.3L595.0,239.5L593.5,241.2L590.3,239.6L587.4,240.6L585.0,240.0L582.9,241.6ZM624.8,272.8L627.2,274.1L631.1,273.8L635.1,273.2L635.7,271.9L641.1,271.6L637.6,269.7L635.0,269.2L633.8,269.2L629.7,268.2L627.5,267.0L626.8,268.7L623.2,269.5ZM692.4,311.6L701.8,313.3L707.9,314.0L708.7,311.6L706.7,309.4L705.5,306.9L701.0,305.7L701.8,301.8L698.6,302.5L695.6,306.9L692.4,310.6ZM522.7,303.7L530.8,305.7L534.7,309.6L530.8,308.6ZM511.1,295.5L514.3,295.9L516.0,300.3L512.8,298.4ZM679.6,305.9L686.3,307.9L682.1,307.4ZM680.1,313.5L685.8,314.5L683.8,315.5ZM647.6,263.5L652.6,263.5L652.6,261.5L647.6,261.5ZM634.1,275.7L637.8,275.2L636.6,274.2L634.1,274.5ZM640.8,277.2L643.0,277.2L642.5,275.4L641.0,275.7ZM636.6,298.6L639.8,298.9L639.0,297.6ZM641.5,291.1L644.0,291.1L643.5,289.4ZM824.3,305.6L829.7,305.0L835.3,304.0L839.0,303.9L841.7,302.9L840.3,302.0L840.8,301.3L842.6,299.4L839.0,298.6L838.8,297.2L838.1,295.9L835.3,294.5L834.4,292.3L833.1,291.1L830.9,291.1L831.9,290.3L833.4,287.9L833.9,287.2L829.7,286.9L828.5,287.2L830.7,284.7L826.0,284.7L824.0,286.7L824.3,289.1L823.0,289.8L824.5,292.8L826.2,293.5L825.8,294.2L829.9,293.7L829.9,295.2L830.9,296.2L831.2,297.4L827.0,297.6L826.7,298.9L828.2,299.6L825.3,301.1L828.0,301.8L830.9,302.3L831.7,302.0L828.0,302.8L825.8,305.0ZM822.8,295.7L824.8,295.0L824.3,294.0L823.3,293.0L820.3,293.4L819.8,294.2L818.1,294.8L820.3,295.6ZM846.7,302.3L848.4,300.8L849.9,298.5L851.6,297.6L853.6,297.3L856.0,297.6L855.6,299.4L854.8,300.7L853.1,301.2L853.6,302.3L853.1,303.9L852.3,303.7L852.6,302.8L850.6,302.2L848.9,302.3ZM853.1,315.1L853.3,314.5L855.5,312.0L857.0,311.6L859.5,311.3L861.9,311.7L861.7,312.8L864.0,313.3L863.9,314.1L863.1,314.7L861.2,314.5L860.4,315.8L859.1,314.4L857.7,315.6L855.5,315.7L855.0,314.7ZM856.8,320.8L855.5,319.9L854.8,317.7L855.5,315.7L857.7,315.6L859.1,314.4L860.4,315.8L861.2,314.5L863.1,314.7L863.9,314.1L864.0,313.3L865.4,313.5L868.3,312.9L868.8,313.8L872.0,314.2L871.3,315.5L872.2,316.4L870.5,316.2L868.6,317.2L869.0,318.1L868.8,319.9L869.3,320.2L871.8,321.4L873.2,324.1L875.2,325.3L878.2,325.5L877.4,326.4L879.9,327.4L883.8,329.7L883.4,330.6L882.3,329.4L880.1,328.9L879.1,330.1L878.9,330.8L880.5,332.5L878.9,334.0L877.9,335.1L876.8,335.0L877.4,333.3L878.2,332.5L876.9,330.1L874.7,328.5L873.5,328.0L870.3,327.1L868.3,325.8L865.6,324.2L864.1,322.9L863.6,321.4L862.4,320.2L860.2,319.4L858.5,320.3ZM868.9,335.5L871.1,334.5L876.7,334.4L875.4,336.2L875.4,338.3L872.7,337.2ZM858.5,327.9L860.9,327.1L862.4,328.9L861.8,332.1L860.2,332.8L859.0,332.1L859.0,329.4ZM1118.0,482.6L1119.2,480.9L1124.9,478.0L1131.0,476.5L1137.2,474.5L1138.9,471.4L1142.1,469.9L1144.6,467.5L1148.3,462.3L1152.0,461.9L1154.4,464.1L1157.1,464.1L1158.6,459.4L1160.6,457.5L1164.5,455.5L1166.7,456.5L1171.6,457.0L1175.1,457.5L1172.9,460.6L1171.6,464.1L1175.3,466.3L1180.7,469.9L1184.4,470.4L1186.4,465.5L1186.6,459.4L1188.8,453.9L1191.3,458.9L1192.0,462.8L1195.7,464.1L1197.5,469.2L1198.2,473.8L1202.4,476.5L1206.1,481.9L1209.3,485.0L1214.4,489.4L1215.9,494.3L1216.2,498.0L1214.7,503.3L1212.2,507.7L1210.3,510.4L1207.8,515.5L1207.3,519.2L1201.2,520.4L1198.2,523.1L1194.5,520.7L1191.3,522.4L1185.2,520.7L1182.2,518.0L1181.0,514.6L1178.0,514.6L1177.8,508.2L1176.3,512.9L1172.9,512.6L1171.6,512.1L1168.4,507.7L1160.8,504.6L1155.4,505.3L1148.3,506.5L1143.3,509.4L1141.4,510.4L1133.5,510.4L1128.6,513.1L1123.7,512.9L1121.2,511.4L1122.9,505.8L1121.2,500.9L1119.2,494.8L1117.0,491.1L1119.2,491.6L1117.8,487.5ZM1194.3,527.0L1198.7,528.0L1202.9,527.3L1203.1,530.7L1200.7,533.8L1197.5,534.0L1195.7,531.4ZM1174.3,514.8L1177.5,514.8L1176.8,515.7L1174.6,515.5ZM1158.8,455.5L1161.8,455.5L1160.6,456.7L1159.1,456.5Z"/><path id="c6" d="M536.2,308.1L604.1,308.1L604.1,307.2L605.6,308.9L612.0,309.8L617.9,310.6L620.8,309.8L629.4,313.3L632.6,315.2L632.9,317.2L635.4,317.2L636.3,321.3L635.6,322.8L633.9,324.7L634.9,326.0L638.3,324.7L644.0,323.3L643.7,322.0L644.7,321.3L649.4,321.3L650.6,319.9L653.1,318.4L654.5,317.9L662.4,317.9L664.1,316.9L665.4,315.7L666.1,313.8L668.1,311.8L670.3,312.0L671.5,312.8L671.5,315.7L672.5,317.4L673.5,318.4L669.8,319.6L666.1,320.8L664.4,322.5L664.1,324.0L666.1,325.7L664.6,326.4L662.4,326.7L658.7,327.2L656.3,328.6L655.8,330.8L654.0,332.8L653.6,334.0L651.6,336.9L650.6,337.4L651.6,338.4L652.6,341.6L649.9,343.0L646.7,345.0L644.0,346.0L641.5,348.2L639.0,350.1L638.1,353.0L638.5,355.5L640.0,358.4L641.5,362.3L641.0,365.5L639.3,366.5L637.1,364.3L634.9,360.1L634.9,357.2L632.4,354.7L630.9,354.5L628.2,355.2L625.5,353.5L621.8,353.8L618.9,353.8L618.4,356.5L615.7,356.5L612.5,355.5L608.3,355.0L605.3,356.0L602.1,358.2L599.2,360.4L599.2,364.4L594.5,363.3L593.5,360.6L591.3,357.9L588.9,355.0L586.1,355.2L584.4,356.9L581.2,355.5L580.0,352.8L576.3,350.2L572.1,350.2L572.1,351.3L565.1,351.3L555.9,348.4L550.2,348.3L549.7,346.9L547.0,344.7L544.1,343.8L541.6,343.4L541.4,341.8L538.4,338.4L537.0,335.5L535.7,334.2L533.8,331.6L532.3,329.1L533.0,326.4L532.0,323.3L533.0,319.1L533.5,315.0L533.0,313.3L531.5,309.6L535.7,310.1ZM491.4,257.8L485.3,256.7L479.1,256.4L471.8,255.7L463.1,254.7L453.1,253.6L447.2,254.9L439.8,256.2L436.1,258.1L429.4,259.6L428.0,260.9L433.6,262.5L435.6,264.0L440.0,265.2L433.6,265.4L424.8,267.6L429.2,270.1L432.4,270.3L437.3,270.3L442.2,269.6L442.7,272.0L438.6,272.8L433.6,274.0L431.2,277.6L429.9,277.4L432.4,280.1L434.9,281.8L439.3,281.3L439.8,283.7L443.5,284.5L448.4,284.2L452.1,284.2L450.9,287.4L444.7,291.1L438.6,293.0L432.9,294.5L439.8,293.5L445.9,292.0L452.1,289.4L457.0,286.7L460.7,284.0L461.9,281.8L465.6,278.9L469.3,278.4L465.6,283.0L470.5,281.8L474.2,280.6L477.9,279.1L481.6,280.6L486.5,281.3L491.4,281.5L495.1,282.0L500.1,284.7L503.7,286.2L506.2,288.6L509.9,292.3L514.1,294.0L518.3,293.5L518.3,290.8L514.1,289.6L510.1,285.2L506.2,283.0L502.5,282.5L500.1,284.0L496.1,281.1L495.9,280.4L491.4,280.6ZM458.2,286.4L463.9,286.4L462.4,288.6L458.2,288.9ZM426.7,280.6L430.4,280.6L430.4,281.8L426.7,281.8ZM454.5,378.4L457.0,379.4L455.5,381.6L454.3,379.9ZM449.1,375.0L450.4,375.0L450.4,375.7L449.1,375.7ZM452.8,376.5L454.5,376.7L454.0,377.4L452.8,377.2ZM856.0,297.6L858.0,296.7L859.5,296.2L860.2,295.0L859.6,293.7L861.5,294.0L862.9,294.7L863.4,295.0L865.4,295.0L865.1,296.1L868.1,295.5L871.3,294.4L873.2,296.2L873.7,297.6L873.1,298.9L874.5,300.6L874.6,302.0L875.2,303.5L873.5,303.3L870.2,304.7L868.1,305.0L869.0,305.9L872.4,308.8L871.5,309.2L869.8,310.2L870.3,311.8L868.3,311.6L865.4,312.0L863.4,312.3L861.9,311.7L859.5,311.3L857.0,311.6L858.5,308.1L854.0,306.9L854.3,306.2L853.3,305.5L854.0,305.0L853.3,304.0L853.1,303.9L853.6,302.3L853.1,301.2L854.8,300.7L855.6,299.4ZM1159.6,324.2L1157.6,322.9L1153.4,325.2L1150.5,325.7L1148.3,327.9L1144.2,330.1L1140.9,331.1L1137.4,332.8L1137.7,330.1L1138.7,328.9L1136.0,327.9L1132.5,330.3L1128.6,332.1L1127.8,332.5L1129.8,335.0L1131.0,336.7L1135.5,335.5L1139.9,336.4L1136.0,338.4L1134.2,339.6L1131.5,342.8L1134.2,344.0L1135.7,347.4L1138.2,350.4L1137.9,352.3L1135.7,353.8L1138.7,355.0L1137.4,358.6L1135.7,359.6L1132.5,364.3L1130.3,367.4L1129.1,368.2L1125.6,370.8L1121.0,372.6L1119.2,373.3L1117.5,373.5L1113.3,375.0L1109.9,376.0L1109.6,378.2L1108.4,375.5L1106.7,375.4L1103.9,375.1L1101.5,374.3L1100.8,372.1L1097.5,370.7L1094.1,372.3L1089.6,373.0L1088.7,376.0L1087.1,375.1L1084.3,375.0L1082.3,373.5L1081.8,371.3L1078.3,369.1L1081.1,364.5L1080.9,360.4L1077.8,358.8L1074.5,356.2L1070.8,356.2L1067.1,359.4L1063.6,359.9L1059.7,358.6L1057.2,360.4L1056.7,359.3L1055.0,359.6L1049.9,359.4L1044.9,357.4L1040.0,354.0L1037.6,353.9L1032.6,351.6L1031.9,350.8L1032.6,348.4L1031.2,348.2L1033.9,347.2L1032.1,344.0L1029.7,341.1L1025.3,340.1L1022.8,337.4L1022.6,336.8L1022.8,333.8L1019.8,333.5L1019.6,331.4L1022.6,329.0L1025.3,329.1L1030.2,327.7L1035.6,324.7L1037.1,322.3L1036.1,318.6L1041.5,316.9L1042.5,312.5L1048.6,312.8L1049.1,309.6L1053.1,307.9L1054.3,307.8L1056.0,310.1L1060.9,311.8L1062.2,317.4L1068.3,318.1L1073.0,319.6L1075.4,323.4L1084.3,323.8L1088.7,324.0L1096.6,326.2L1102.8,324.2L1108.9,323.6L1113.8,320.8L1113.6,317.7L1117.8,318.4L1122.4,316.9L1125.1,314.7L1133.3,313.8L1128.6,310.7L1123.7,310.8L1122.7,310.6L1125.4,306.1L1128.1,306.9L1131.0,305.7L1135.2,300.8L1133.5,299.1L1136.0,297.6L1142.1,297.0L1148.3,299.1L1152.0,305.0L1152.0,306.2L1158.1,308.4L1160.6,311.3L1164.2,311.3L1169.8,309.7L1167.9,312.3L1165.7,317.7L1163.0,317.4L1160.6,318.1L1161.1,321.6ZM1105.7,380.9L1107.9,378.9L1108.9,378.7L1111.4,379.6L1110.1,381.8L1107.9,383.3L1105.7,382.6Z"/><path id="c7" d="M535.5,241.5L536.9,241.7L540.6,242.6L542.0,243.6L543.8,243.4L547.4,243.0L549.5,242.4L552.2,242.0L554.8,239.5L552.4,238.1L549.2,238.7L547.7,239.1L546.5,238.9L542.5,240.0L541.4,240.5L539.0,239.9ZM593.6,259.7L595.5,259.3L597.4,260.4L599.9,259.2L601.6,259.3L604.1,258.6L600.8,257.0L598.9,256.9L597.1,256.2L595.2,258.6ZM578.4,237.6L579.6,236.4L582.5,236.9L584.4,238.8L587.6,238.7L590.1,237.7L592.5,237.3L595.0,237.8L593.3,235.0L591.6,235.7L590.1,234.8L587.4,234.2L585.7,233.5L582.0,234.7L580.9,234.8L576.8,235.4ZM597.1,237.9L600.3,238.4L601.5,237.9L605.3,238.5L604.6,235.7L602.7,236.0L600.0,234.9L598.6,235.0ZM558.2,236.7L560.4,237.5L563.0,236.6L564.9,236.7L567.3,238.0L568.7,235.5L567.4,236.1L563.9,235.2L562.0,235.8L560.1,234.9ZM557.2,239.8L558.9,238.5L561.4,239.6L563.4,239.2L566.2,239.8L567.4,237.4L565.8,238.2L563.3,236.8L560.0,237.2L558.0,238.9ZM601.0,245.5L603.2,245.1L605.5,246.0L608.2,244.8L607.8,242.8L606.8,244.1L603.7,242.8L601.8,243.0ZM638.9,249.4L641.9,249.7L643.7,250.1L645.8,250.1L648.4,249.9L650.8,249.1L647.8,248.2L646.9,248.3L644.2,248.7L643.0,247.8L640.3,248.8ZM576.3,249.1L580.5,249.3L579.5,247.9ZM544.3,243.5L548.5,243.2L548.0,242.5L544.3,242.5ZM658.0,236.7L661.3,237.4L663.7,238.4L664.8,240.3L666.4,239.3L668.4,242.1L671.4,242.4L674.1,242.5L675.0,242.5L678.5,242.9L680.3,241.9L681.4,243.7L685.0,242.3L686.5,242.6L689.0,242.3L691.0,242.5L692.4,243.1L693.5,242.8L697.1,244.1L697.4,246.1L700.1,247.0L701.4,250.3L703.5,250.5L704.4,253.3L703.4,256.0L705.9,256.7L709.0,257.7L711.0,256.6L712.9,257.3L710.7,260.1L709.0,260.0L706.1,261.4L707.5,266.1L707.6,267.4L709.7,268.2L711.7,270.1L714.4,272.7L716.0,274.4L716.1,274.7L718.7,276.4L718.3,279.1L722.1,279.4L723.3,279.9L724.7,281.4L727.4,281.2L729.6,280.9L733.0,282.4L732.3,280.2L734.2,278.6L735.5,275.8L738.0,274.8L739.6,272.4L739.1,270.4L740.4,268.1L743.3,267.1L745.1,266.8L747.1,267.8L749.2,265.9L752.5,266.5L753.4,265.4L754.6,263.0L756.5,263.0L759.4,262.6L761.1,262.5L764.1,261.3L766.1,261.7L767.6,261.6L770.9,260.9L772.9,258.7L775.0,257.9L776.9,256.8L778.7,257.2L781.6,256.4L784.0,255.6L783.8,252.9L783.4,249.4L785.2,248.1L786.7,245.6L789.8,244.6L791.8,242.6L790.6,240.0L789.6,236.5L792.6,234.8L794.0,235.1L796.2,232.5L799.2,232.6L801.2,231.2L803.0,230.0L804.8,230.8L805.8,228.5L809.6,229.6L805.7,229.2L803.8,228.3L802.0,228.4L800.0,228.4L798.0,227.2L795.7,227.9L793.6,227.7L790.6,228.2L788.7,228.4L787.2,227.8L784.5,227.6L783.5,227.3L780.2,226.2L777.9,225.6L776.9,226.1L775.5,225.8L772.5,225.7L770.6,225.4L768.3,224.4L766.2,224.7L765.4,224.3L762.3,223.7L760.4,223.7L759.0,223.2L757.0,224.5L754.8,223.5L751.3,224.8L749.3,225.1L748.4,225.0L746.1,223.9L744.6,225.0L741.3,224.3L739.8,224.9L736.9,224.2L735.2,224.7L734.7,224.8L731.6,224.3L730.2,225.9L727.0,226.1L725.7,224.5L724.4,225.8L721.8,225.5L718.4,225.5L716.6,225.5L714.8,225.6L712.7,226.1L711.5,227.0L709.8,227.5L706.9,227.5L705.3,227.6L703.1,226.9L700.6,227.3L699.7,226.6L695.9,227.1L694.6,227.4L691.8,228.0L691.1,227.3L689.5,227.9L686.9,229.4L684.2,229.3L682.4,229.4L679.6,230.0L679.0,229.3L676.2,230.1L672.6,232.4L670.8,233.8L669.9,233.9L666.3,234.6L665.8,235.3L663.5,236.3L660.2,236.4ZM669.5,556.2L669.5,561.7L674.7,561.9L677.9,561.0L673.5,559.5L670.5,557.0ZM669.5,556.2L665.1,556.5L665.4,558.2L663.9,559.7L661.2,560.7L666.1,562.4L671.0,563.4L673.0,564.1L673.5,562.4L669.5,561.7ZM1072.1,234.5L1074.1,234.4L1076.1,235.1L1077.6,233.9L1080.8,234.2L1082.3,234.5L1084.3,233.1L1086.4,234.3L1089.0,234.8L1091.0,234.7L1092.9,235.3L1094.0,236.3L1097.1,235.8L1095.1,234.2L1093.5,233.5L1091.1,231.6L1089.9,231.7L1087.0,230.8L1085.6,230.2L1083.7,229.9L1081.2,230.5L1078.5,230.1L1077.1,229.4L1075.2,230.3L1073.1,230.0L1071.2,230.9L1068.9,231.4L1066.6,232.5L1064.8,232.9L1066.7,232.9L1069.2,234.3ZM1176.5,244.0L1192.5,242.5L1208.5,244.0L1197.5,245.2L1182.7,245.7ZM957.1,258.6L960.8,258.4L960.1,260.1L957.6,259.8Z"/><path id="c8" d="M880.0,309.1L880.6,308.5L882.6,308.3L884.7,306.9L887.7,307.7L890.0,307.2L893.8,307.9L892.8,309.6L888.7,309.4L886.8,310.1L884.5,311.1L880.4,310.5ZM877.9,313.4L878.6,312.0L880.4,310.5L884.5,311.1L886.8,310.1L888.7,309.4L892.8,309.6L894.6,310.6L892.4,312.0L890.5,314.5L888.1,315.1L884.8,315.7L880.1,315.5L878.4,314.2ZM872.0,314.2L875.2,314.0L877.9,313.4L878.4,314.2L876.7,315.0L875.9,316.7L871.8,316.8L872.2,316.4L871.3,315.5ZM871.8,316.8L875.9,316.7L876.7,315.0L878.4,314.2L880.1,315.5L884.8,315.7L885.3,317.9L880.1,317.4L877.2,317.4L878.2,319.9L881.6,323.0L883.8,324.1L880.1,322.8L875.7,319.9L874.0,317.2L872.5,318.4ZM877.2,317.4L880.1,317.4L885.3,317.9L886.0,319.9L885.8,321.6L883.8,323.8L883.8,324.1L881.6,323.0L878.2,319.9ZM885.3,317.9L884.8,315.7L888.1,315.1L891.3,317.4L890.9,318.3L893.5,318.6L894.1,319.9L893.4,320.8L894.9,322.3L893.3,324.5L891.2,324.6L889.0,325.5L887.5,323.8L885.5,321.8L885.8,321.6L886.0,319.9ZM883.8,324.1L883.8,323.8L885.8,321.6L885.5,321.8L887.5,323.8L886.0,325.5L885.8,325.5ZM885.8,325.5L886.0,325.5L887.5,323.8L889.0,325.5L888.7,327.4L890.0,328.0L887.5,330.8L886.0,329.4L886.3,326.9ZM888.7,327.4L889.0,325.5L891.2,324.6L893.3,324.5L894.8,326.8L890.0,328.0ZM894.1,319.9L901.0,321.2L904.7,320.0L908.7,320.9L906.9,323.5L907.2,325.2L903.2,326.0L902.3,326.8L898.6,326.4L894.8,326.8L893.3,324.5L894.9,322.3L893.4,320.8ZM1103.9,375.1L1101.0,376.9L1098.8,380.1L1098.3,382.1L1100.3,384.5L1102.0,386.7L1104.7,388.4L1106.4,391.1L1107.2,394.8L1107.4,397.2L1106.4,399.9L1101.8,402.4L1100.8,404.5L1097.3,406.5L1096.0,406.7L1096.4,403.3L1095.2,402.3L1096.8,401.0L1099.6,400.9L1098.8,399.2L1102.8,397.7L1102.9,391.8L1102.8,391.1L1102.0,388.9L1100.3,386.5L1097.1,382.8L1094.1,380.4L1096.4,378.4L1091.7,376.7L1089.6,373.0L1094.1,372.3L1097.5,370.7L1100.8,372.1L1101.5,374.3ZM1084.7,412.0L1087.0,413.8L1089.5,412.6L1092.7,416.0L1092.8,420.4L1094.8,424.3L1092.9,424.5L1089.7,422.3L1087.5,420.4L1085.8,417.5L1085.2,414.3ZM1108.0,422.7L1112.1,421.4L1112.3,421.8L1116.3,419.9L1118.7,416.6L1122.2,414.5L1123.9,413.1L1125.6,410.6L1127.8,412.6L1128.8,413.5L1131.5,415.0L1129.3,417.2L1128.3,417.5L1122.9,417.2L1121.4,420.6L1120.7,422.8L1118.0,424.5L1113.8,424.3L1110.1,425.6L1108.2,425.3ZM1097.1,444.3L1099.1,442.1L1101.5,442.2L1105.5,444.2L1109.9,444.5L1111.4,443.3L1115.5,444.8L1115.5,445.3L1119.7,446.7L1120.0,449.1L1113.8,448.0L1108.9,447.0L1104.0,446.6L1100.0,445.6ZM1121.7,447.5L1126.1,448.1L1131.0,448.0L1136.0,448.2L1140.9,447.8L1140.4,448.9L1133.5,449.3L1128.6,449.4L1123.7,449.4L1121.4,449.2ZM1142.1,452.8L1144.6,450.1L1148.3,448.4L1151.5,448.2L1149.5,449.9L1145.8,451.1L1143.3,452.8ZM1131.0,450.9L1135.5,451.9L1134.0,452.8L1131.0,451.6ZM1133.5,426.0L1135.5,424.5L1140.9,425.4L1145.3,424.0L1146.3,424.3L1144.1,426.7L1140.9,426.6L1136.0,426.6L1133.7,427.9L1134.7,430.1L1137.2,429.9L1141.9,430.0L1139.2,431.8L1137.2,432.3L1138.9,435.0L1141.4,437.5L1141.1,440.4L1138.4,439.4L1137.2,437.5L1135.7,434.2L1134.5,437.5L1134.5,441.1L1132.0,441.1L1132.3,436.2L1130.5,434.3L1131.8,430.6L1133.0,427.7ZM1151.7,425.3L1153.2,422.3L1154.9,424.0L1153.7,426.5L1154.4,428.9L1152.9,429.7L1152.4,427.0ZM1152.9,435.5L1156.9,434.5L1160.1,436.0L1156.9,436.2L1153.2,436.2ZM1148.3,435.5L1151.2,435.5L1150.7,437.0L1148.5,436.7ZM1203.1,441.6L1207.3,439.9L1211.0,437.9L1213.0,437.9L1212.2,440.6L1208.5,442.8L1203.6,442.8ZM1209.3,434.0L1213.4,436.2L1214.9,438.9L1213.7,437.5L1209.8,434.8ZM1218.6,440.4L1220.8,442.3L1221.8,444.3L1220.1,443.6ZM1223.3,444.3L1225.8,445.8L1231.4,448.2L1225.8,446.7ZM1230.9,450.4L1233.9,451.9L1232.4,451.6ZM1233.4,448.2L1235.1,450.9L1234.4,449.7Z"/><path id="c9" d="M814.7,302.0L818.6,301.3L822.6,300.3L823.5,297.6L823.3,295.9L822.8,295.7L820.3,295.6L818.1,294.8L819.8,294.2L820.3,293.4L820.3,292.8L817.9,293.1L816.9,294.5L817.4,295.2L813.7,295.5L813.7,297.4L816.2,298.0L814.9,299.4L812.7,300.6L813.7,301.8ZM859.6,293.7L858.2,292.2L858.2,289.8L859.5,288.4L864.4,286.8L864.1,288.6L863.6,289.6L865.1,290.1L863.4,290.8L862.4,292.3L861.5,294.0ZM865.6,291.8L869.3,290.9L869.3,292.0L868.3,293.6L867.3,294.4L865.4,293.0ZM862.4,292.5L864.9,292.3L864.9,293.4L862.9,293.4ZM887.5,330.8L890.0,328.0L894.8,326.8L898.6,326.4L902.3,326.8L903.2,326.0L903.7,326.8L903.1,327.8L902.0,328.0L898.3,327.8L896.8,329.6L895.9,329.5L894.6,328.6L893.9,330.1L895.6,332.3L894.6,332.8L897.5,335.8L895.9,335.0L894.9,335.2L895.4,336.7L895.2,338.8L893.6,338.9L891.7,337.9L890.2,335.5L891.8,334.2L890.2,334.2L889.2,332.8ZM896.1,341.1L903.0,341.6L902.8,342.3L899.1,342.4L896.1,341.7ZM870.3,261.8L874.0,260.8L877.7,259.3L875.7,261.0L871.5,262.0ZM1189.3,295.0L1190.8,299.6L1190.6,304.5L1194.3,309.0L1189.6,313.0L1191.3,314.2L1191.1,315.5L1187.6,315.7L1187.6,311.1L1187.9,306.9L1187.1,302.0L1186.9,297.6ZM1136.0,366.7L1137.4,366.0L1138.4,366.7L1136.9,371.3L1135.6,374.3L1133.7,371.6L1134.0,369.6ZM1160.3,344.9L1163.0,342.5L1165.5,341.0L1169.2,340.7L1172.4,340.8L1172.9,339.4L1174.8,336.7L1176.1,336.2L1175.3,337.9L1179.0,336.4L1181.5,333.8L1182.7,330.1L1182.7,328.6L1183.4,327.2L1186.1,326.7L1186.4,328.9L1187.6,331.1L1186.4,334.2L1185.2,335.2L1185.2,337.7L1184.7,340.5L1182.3,342.5L1182.2,340.8L1180.7,341.8L1179.7,343.3L1178.3,343.3L1175.3,343.3L1175.1,342.3L1175.1,344.0L1172.4,346.1L1170.9,344.3L1171.4,343.0L1167.9,343.3L1164.2,344.0L1160.6,344.9ZM1160.3,345.0L1162.3,345.7L1163.0,347.7L1161.5,351.1L1159.8,352.1L1158.6,351.3L1158.6,349.1L1157.4,347.9L1157.4,346.2L1159.1,345.7ZM1164.2,345.0L1168.4,343.9L1169.7,345.2L1168.4,346.6L1166.2,346.2L1165.5,347.8L1164.0,346.2ZM1182.7,326.4L1183.4,324.5L1183.7,321.9L1186.1,322.0L1186.9,319.1L1187.6,316.7L1190.1,318.9L1195.7,319.6L1197.0,321.9L1193.5,322.8L1190.8,325.2L1187.1,323.8L1185.2,324.5L1183.7,324.0L1184.4,325.7ZM1152.4,364.0L1153.9,362.3L1153.2,363.5ZM922.6,351.6L924.3,355.6L924.4,355.5L925.6,350.8L925.9,347.9L926.0,346.6L924.6,346.9ZM1263.1,511.8L1266.1,513.8L1268.3,517.5L1270.8,517.0L1271.8,519.4L1276.2,519.4L1277.4,519.8L1275.9,523.1L1273.7,523.8L1273.2,526.3L1269.5,529.2L1268.1,528.5L1269.0,525.8L1265.8,523.6L1267.8,521.9L1268.3,519.0L1266.8,516.8L1264.1,513.6ZM1263.1,526.5L1267.1,528.0L1266.8,529.9L1264.4,532.6L1263.4,534.6L1259.7,535.8L1258.5,539.7L1255.3,541.4L1252.3,541.4L1247.9,539.9L1248.6,537.7L1252.3,535.1L1257.7,532.6L1260.2,529.7L1261.9,527.3ZM1250.3,541.9L1252.1,542.1L1251.6,543.1L1250.3,542.9Z"/><path id="c10" d="M1135.0,382.6L1138.4,382.6L1139.4,386.2L1137.4,389.1L1137.9,392.3L1140.9,393.8L1143.6,397.0L1141.6,396.0L1138.4,394.5L1135.2,394.0L1135.0,392.3L1133.5,389.9L1134.2,387.2ZM1138.7,410.9L1142.1,406.7L1145.1,406.7L1147.0,403.8L1149.5,408.2L1149.0,412.3L1147.0,414.0L1143.3,411.8L1143.3,409.4L1140.9,409.4ZM1138.4,399.4L1141.1,399.6L1139.9,402.3L1138.2,402.1ZM1140.9,401.1L1143.3,400.4L1141.9,404.5L1139.9,404.8ZM1144.1,397.2L1147.0,397.9L1147.3,400.9L1145.8,403.3L1144.6,401.8ZM1134.5,395.0L1136.9,395.2L1136.7,397.4L1135.5,397.4ZM1126.6,407.2L1132.3,400.1L1132.8,402.1L1127.8,407.0Z"/><path id="c11" d="M819.6,287.9L822.8,285.2L823.0,286.4L820.6,288.6ZM834.4,279.8L835.8,279.8L835.3,281.5L834.4,281.3ZM1148.5,335.6L1149.7,337.4L1149.5,339.9L1149.0,343.0L1152.0,343.3L1155.9,342.1L1156.6,339.9L1156.6,337.4L1154.0,333.5L1150.0,335.1ZM1148.8,346.2L1150.5,346.0L1150.2,346.6L1148.8,346.6Z"/><path id="c12" d="M611.5,392.3L613.5,393.8L616.7,394.1L618.4,392.6L618.9,391.3L621.3,389.4L619.6,388.9L621.3,386.2L621.1,382.6L619.0,384.3L614.4,384.3L614.4,385.7L615.9,388.4L612.7,388.4L611.5,390.4ZM616.7,394.1L620.6,395.5L622.6,395.5L623.3,396.2L625.0,394.0L627.5,393.8L629.7,391.6L633.8,391.1L631.7,389.1L626.7,388.9L621.3,389.4L618.9,391.3L618.4,392.6ZM623.3,396.2L625.5,398.4L627.5,400.6L629.4,400.9L632.4,401.1L632.9,397.2L633.8,391.1L629.7,391.6L627.5,393.8L625.0,394.0ZM627.5,400.6L627.2,403.3L629.9,404.3L632.6,406.7L634.4,408.1L635.1,404.4L632.4,401.1L629.4,400.9ZM634.4,408.1L637.3,408.2L639.3,410.0L641.5,409.4L640.8,407.4L642.7,405.9L645.4,407.4L646.7,410.1L648.0,406.6L645.2,404.5L642.5,404.4L639.0,406.2L636.1,405.5L635.1,404.4ZM629.4,374.3L634.1,371.6L637.8,371.3L642.7,372.6L647.6,374.5L652.1,376.2L655.8,378.4L652.6,379.1L647.2,379.3L648.9,377.4L645.2,375.2L640.3,374.0L636.6,373.0L632.9,374.0ZM655.3,382.3L658.7,379.1L661.9,379.4L661.9,384.5L660.0,383.3ZM661.9,379.4L666.1,379.6L670.0,382.3L667.3,382.8L663.6,383.3L661.9,384.5ZM645.7,382.8L650.6,383.5L649.1,384.1L645.9,383.4ZM673.0,382.7L676.9,382.9L676.4,383.8L673.0,383.8ZM644.2,424.3L641.5,425.7L641.3,427.7L639.3,430.1L639.3,433.1L641.5,434.0L642.0,433.1L640.8,436.0L640.4,437.7L642.7,438.7L644.0,439.9L645.2,437.5L646.4,435.0L650.1,433.8L652.3,431.4L653.1,427.9L650.1,427.1L646.9,425.7ZM1013.0,324.5L1013.0,323.8L1019.1,322.8L1022.1,322.3L1025.3,323.0L1032.6,323.3L1035.6,324.7L1030.2,327.7L1025.3,329.1L1022.6,329.0L1019.6,331.4L1014.7,331.3L1008.8,331.3L1009.3,329.9L1011.5,329.1L1011.7,327.9L1014.7,329.6L1018.1,328.1L1014.9,326.7ZM1004.1,331.8L1007.1,329.6L1008.8,328.1L1011.5,329.1L1009.3,329.9L1008.8,331.3L1014.7,331.3L1019.6,331.4L1019.8,333.5L1022.8,333.8L1022.6,336.8L1018.6,336.3L1014.9,338.2L1014.2,335.2L1011.0,336.0L1009.3,337.2L1005.6,337.4L1005.1,336.9L1006.6,334.5ZM1089.6,373.0L1088.7,376.0L1087.1,375.1L1084.5,378.0L1085.5,380.1L1087.3,380.1L1086.8,385.0L1089.5,383.3L1090.7,383.9L1094.1,383.0L1096.0,387.4L1098.1,392.6L1099.1,393.7L1102.9,391.8L1102.8,391.1L1102.0,388.9L1100.3,386.5L1097.1,382.8L1094.1,380.4L1096.4,378.4L1091.7,376.7ZM1091.4,399.3L1090.2,394.5L1091.7,392.9L1097.1,392.8L1099.1,393.7L1102.9,391.8L1102.8,397.7L1098.8,399.2L1099.6,400.9L1096.8,401.0L1095.2,402.3L1092.9,401.8L1091.7,400.9ZM1055.9,363.3L1057.2,363.5L1059.2,364.3L1059.3,366.0L1064.6,366.2L1065.6,366.9L1062.7,368.9L1062.7,370.4L1063.4,371.6L1065.4,369.9L1066.1,374.0L1067.6,373.5L1067.8,369.1L1069.8,369.4L1071.0,366.2L1072.5,362.8L1076.7,360.8L1077.8,358.8L1074.5,356.2L1070.8,356.2L1067.1,359.4L1063.6,359.9L1064.9,362.1L1059.7,362.4L1057.2,362.3L1057.0,361.1L1056.7,359.3L1055.0,359.6L1055.1,363.3ZM1055.0,359.6L1049.9,359.4L1044.9,357.4L1040.0,354.0L1037.6,353.9L1036.1,355.0L1035.2,357.3L1037.6,358.6L1042.5,360.8L1044.9,360.8L1047.4,362.3L1052.3,363.0L1055.1,363.3ZM1057.0,361.1L1057.2,362.3L1059.7,362.4L1064.9,362.1L1063.6,359.9L1059.7,358.6L1057.2,360.4ZM1057.5,374.8L1060.9,374.0L1064.1,373.3L1065.4,377.1L1066.1,375.7L1066.1,374.0L1065.4,369.9L1063.4,371.6L1062.7,370.4L1062.7,368.9L1065.6,366.9L1064.6,366.2L1059.3,366.0L1059.2,364.3L1057.2,363.5L1055.9,363.3L1055.8,364.7L1055.0,367.4L1056.5,368.4L1056.7,371.1L1057.2,373.3ZM966.2,381.3L973.6,378.9L975.2,374.0L974.1,372.3L975.6,369.1L976.8,366.9L978.2,368.5L982.5,370.1L985.4,372.8L982.2,377.9L980.2,381.5L976.8,383.9L973.6,386.2L968.9,387.1ZM924.3,356.1L927.1,356.5L928.6,354.9L930.5,354.5L929.3,350.8L934.7,349.3L933.7,346.2L928.8,348.9L925.9,347.9L925.6,350.8L924.4,355.5ZM924.6,346.9L926.0,346.6L928.3,344.3L926.9,343.2ZM926.1,340.1L926.9,343.2L928.3,344.3L926.0,346.6L925.9,347.9L928.8,348.9L933.7,346.2L939.2,343.8L940.1,340.8L939.7,338.9L942.6,337.1L938.4,337.2L933.5,338.2L929.3,338.3L928.5,339.2L927.2,339.9ZM936.7,321.8L944.1,322.3L949.0,323.5L952.4,325.6L952.7,327.5L949.0,326.9L945.2,327.4L943.1,326.2L940.5,326.4L940.9,325.0L940.1,323.5ZM945.2,327.4L949.0,326.9L950.5,328.1L952.7,331.3L952.0,332.8L948.5,330.8L945.7,329.7ZM949.0,326.9L952.7,327.5L952.4,325.6L957.6,325.6L960.1,328.6L962.0,329.4L959.6,331.8L958.6,333.9L957.4,331.6L955.9,331.0L952.0,332.8L952.7,331.3L950.5,328.1ZM832.9,342.1L830.9,341.6L825.3,340.1L823.8,340.3L823.5,341.8L821.6,344.6L819.6,345.7L817.4,346.6L816.2,347.9L814.2,350.8L814.7,353.5L813.2,356.0L810.0,358.6L805.8,360.2L817.0,360.2L817.0,357.7L821.1,355.7L826.0,354.5L829.4,352.8L830.9,350.4L835.3,349.1L834.1,346.4L833.9,344.0ZM805.8,360.2L802.6,364.0L799.2,369.9L796.5,375.6L806.3,375.7L806.3,371.6L808.8,370.5L808.8,364.3L817.0,364.3L817.0,360.2ZM859.5,337.7L862.4,336.7L865.4,337.3L864.1,338.9L864.4,340.6L865.6,341.8L863.1,344.0L863.1,345.0L865.6,346.0L866.7,346.8L866.6,348.2L863.6,350.4L863.4,352.3L861.7,353.9L860.6,349.4L858.7,348.4L856.8,345.2L858.5,343.3L858.7,341.6ZM933.0,383.8L935.3,389.6L939.7,392.1L942.6,395.5L944.3,396.7L942.6,397.3L938.7,393.3L934.2,392.1L931.5,391.6L928.0,392.8L928.1,391.1L930.3,386.0ZM921.9,430.1L921.9,427.0L923.2,425.0L924.4,423.3L921.9,417.5L920.7,418.6L917.0,418.9L914.1,419.2L915.3,422.3L911.4,426.0L911.1,431.1L913.3,430.3ZM911.1,431.1L913.3,430.3L914.1,430.1L913.3,433.6L909.6,434.3L910.1,431.8ZM909.6,434.3L913.3,433.6L914.1,435.8L910.6,438.7L910.1,435.8ZM937.8,453.3L938.2,458.2L938.7,463.1L936.2,467.5L929.1,471.4L924.2,476.0L925.4,481.4L925.6,486.0L919.5,489.4L918.5,491.0L919.2,493.2L917.3,493.2L916.9,490.9L917.0,487.5L915.3,482.4L918.0,479.7L919.0,475.8L919.5,471.4L917.0,468.0L913.1,466.7L912.6,464.3L920.0,461.9L923.2,463.3L925.1,469.4L926.6,464.1L923.4,454.5L924.2,455.9L928.1,456.2L933.0,455.5ZM919.5,450.6L922.7,451.4L923.4,454.5L926.6,464.1L925.1,469.4L923.2,463.3L920.0,461.9L918.7,460.9L920.2,458.0L920.2,454.1ZM904.7,499.9L908.9,497.5L910.6,499.4L907.9,502.4L905.7,501.6ZM915.3,490.5L916.9,490.9L917.3,493.2L916.8,494.3L914.1,493.1ZM900.4,471.1L904.7,471.5L909.4,466.6L913.1,466.7L917.0,468.0L919.5,471.4L919.0,475.8L918.0,479.7L915.3,482.4L910.6,481.9L907.2,480.4L906.4,477.7L902.8,475.5ZM900.4,471.1L895.9,470.6L892.4,467.2L892.4,459.4L897.3,459.4L897.3,454.5L900.5,456.0L904.5,456.9L908.2,458.2L909.6,460.4L911.6,460.4L911.6,457.3L908.2,456.6L908.7,450.4L914.1,447.7L914.6,448.7L918.2,450.1L919.5,450.6L920.2,454.1L920.2,458.0L918.7,460.9L920.0,461.9L912.6,464.3L913.1,466.7L909.4,466.6L904.7,471.5ZM865.6,437.3L867.5,439.4L867.8,439.9L869.3,438.4L870.3,438.9L873.7,439.7L877.4,437.5L878.2,433.1L881.8,429.2L882.8,422.3L884.1,419.2L878.9,419.9L877.9,422.3L874.0,422.3L871.0,422.3L871.0,424.8L873.5,424.5L874.0,428.9L872.5,433.6L869.0,433.1L867.1,434.8ZM865.6,437.3L861.9,433.6L860.4,430.1L859.9,429.4L861.4,426.7L862.4,425.3L866.1,425.3L866.1,422.3L871.0,422.3L871.0,424.8L873.5,424.5L874.0,428.9L872.5,433.6L869.0,433.1L867.1,434.8ZM862.4,425.3L862.4,422.1L866.1,422.3L866.1,425.3ZM862.4,422.1L861.7,417.9L860.2,416.6L859.2,416.1L860.9,412.1L863.4,410.6L866.1,411.6L867.8,409.4L872.0,401.1L874.2,399.6L873.2,397.4L873.0,395.7L875.0,397.2L875.4,403.3L872.5,404.3L876.4,409.4L874.5,413.1L874.0,415.7L875.7,418.4L877.9,422.3L874.0,422.3L871.0,422.3L866.1,422.3ZM842.4,412.6L844.9,412.2L845.1,408.7L845.2,405.5L847.6,401.6L847.2,399.2L845.2,397.4L843.7,397.4L843.7,398.7L840.5,400.9L840.3,402.3L841.7,405.0L842.2,410.9ZM841.3,412.8L842.4,412.6L842.2,410.9L841.7,405.0L840.3,402.3L840.5,400.9L837.9,400.6L838.3,401.8L839.3,403.3L839.8,407.7L839.5,410.9ZM830.7,415.3L833.4,416.1L837.8,414.2L841.3,412.8L839.5,410.9L839.8,407.7L839.3,403.3L838.3,401.8L837.9,400.6L831.4,400.9L831.7,404.5L832.1,407.7L830.4,411.1L831.4,414.0ZM824.8,402.3L827.0,404.0L831.7,404.5L831.4,400.9L837.9,400.6L840.5,400.9L843.7,398.7L840.8,395.0L838.8,391.3L836.6,390.9L833.4,393.1L829.9,395.2L827.5,395.7L825.5,398.7L824.8,399.9ZM819.8,417.1L823.5,416.0L828.5,414.9L830.7,415.3L831.4,414.0L830.4,411.1L832.1,407.7L831.7,404.5L827.0,404.0L824.8,402.3L823.0,401.8L818.9,402.8L818.1,405.7L819.4,407.2L817.6,409.2L817.9,412.3L820.1,413.5ZM810.0,410.7L811.7,412.3L816.2,415.5L819.8,417.1L820.1,413.5L817.9,412.3L817.6,409.2L815.4,409.6L815.2,407.2L813.0,407.0L812.2,408.7ZM805.6,405.6L805.7,407.0L807.5,409.6L810.0,410.7L812.2,408.7L813.0,407.0L812.2,405.5L810.7,403.3L807.5,403.5ZM801.4,401.0L802.4,402.1L804.6,404.5L805.6,405.6L807.5,403.5L810.7,403.3L812.2,405.5L813.0,407.0L815.2,407.2L815.4,409.6L817.6,409.2L819.4,407.2L818.1,405.7L818.9,402.8L817.9,400.9L816.2,397.4L810.3,397.4L804.6,397.0L804.6,399.2L802.1,399.6ZM797.2,397.6L798.9,398.7L801.4,401.0L802.1,399.6L804.6,399.2L804.6,397.0L800.9,396.7Z"/><path id="c13" d="M944.3,396.7L945.1,398.4L944.8,399.6L944.7,399.8L943.6,401.0L941.1,400.9L942.6,397.3ZM797.7,388.5L795.2,391.7L797.6,394.5L801.4,394.0L804.4,395.0L801.4,395.2L797.0,395.7L797.1,397.2L797.2,397.6L800.9,396.7L804.6,397.0L810.3,397.4L810.3,396.0L808.3,391.7L806.3,389.9L802.6,387.1ZM797.0,395.7L797.6,394.5L801.4,394.0L804.4,395.0L801.4,395.2Z"/><path id="c14" d="M808.3,391.7L810.3,396.0L810.3,397.4L816.2,397.4L817.9,400.9L818.9,402.8L823.0,401.8L824.8,402.3L824.8,399.9L825.5,398.7L827.5,395.7L829.9,395.2L833.4,393.1L836.6,390.9L838.8,391.3L841.7,390.4L846.9,390.1L848.6,386.7L848.8,381.0L846.4,381.3L845.9,379.6L842.7,378.2L841.3,376.6L826.4,366.7L822.3,366.7L824.5,387.4L825.3,387.9L824.8,389.9L815.2,390.0L810.0,389.6Z"/></defs>
<g filter="url(#sb)">
<use href="#land" fill="#d9e6cc"/>
<use href="#c0" fill="#f6f5e2" stroke="#f6f5e2" stroke-width="0.6"/>
<use href="#c1" fill="#cfe2ca" stroke="#cfe2ca" stroke-width="0.6"/>
<use href="#c2" fill="#a6caa0" stroke="#a6caa0" stroke-width="0.6"/>
<use href="#c3" fill="#6da865" stroke="#6da865" stroke-width="0.6"/>
<use href="#c4" fill="#53833d" stroke="#53833d" stroke-width="0.6"/>
<use href="#c5" fill="#396830" stroke="#396830" stroke-width="0.6"/>
<use href="#c6" fill="#2b5321" stroke="#2b5321" stroke-width="0.6"/>
<use href="#c7" fill="#c9a840" stroke="#c9a840" stroke-width="0.6"/>
<use href="#c8" fill="#adb876" stroke="#adb876" stroke-width="0.6"/>
<use href="#c9" fill="#8ba35a" stroke="#8ba35a" stroke-width="0.6"/>
<use href="#c10" fill="#e2cd78" stroke="#e2cd78" stroke-width="0.6"/>
<use href="#c11" fill="#5d7a35" stroke="#5d7a35" stroke-width="0.6"/>
<use href="#c12" fill="#dddcb2" stroke="#dddcb2" stroke-width="0.6"/>
<use href="#c13" fill="#ddb24a" stroke="#ddb24a" stroke-width="0.6"/>
<use href="#c14" fill="#e7efdf" stroke="#e7efdf" stroke-width="0.6"/>
<g>
<path d="M687.6,264.4L684.8,266.9L684.8,268.0L681.6,267.8L680.8,268.6L678.3,268.7L674.7,268.1L678.1,270.3L678.1,271.7L679.7,274.0L678.5,273.8L676.7,272.9L675.2,273.7L673.1,271.3L669.0,272.1L671.8,273.9L672.7,275.3L677.7,275.8L677.3,277.2L675.8,277.0L672.5,276.5L673.2,274.4L670.4,275.2L667.3,274.9L666.9,274.1L662.8,272.5L661.2,271.7L658.5,271.9L657.5,271.0L656.3,269.7L651.8,271.4L651.4,269.3L648.2,271.3L646.0,270.8L647.2,268.6L647.6,267.7L651.2,268.0L653.6,267.5L656.8,269.3L656.5,265.0L657.7,262.4L656.5,261.6L652.9,261.2L652.6,259.8L649.8,258.6L647.2,257.4L643.2,256.9L641.3,256.1L640.7,258.2L637.4,255.7L636.7,257.5L633.2,255.7L632.1,256.3L628.6,255.9L627.6,255.2L622.9,255.4L620.5,256.9L620.7,257.0L617.1,252.5L617.8,250.4L615.5,246.6L617.6,246.9L620.3,247.4L621.7,246.3L625.7,247.1L625.7,247.8L628.4,248.8L631.9,247.9L632.8,247.8L638.0,246.8L639.7,248.9L640.3,247.4L644.8,249.7L647.2,250.7L648.6,251.1L651.7,250.1L652.7,250.9L655.6,251.9L659.0,254.9L659.9,252.7L662.6,253.7L665.5,254.3L668.2,255.2L668.6,256.6L669.9,258.4L672.4,260.5L676.8,260.0L678.5,263.6L681.0,264.0L684.2,263.9L685.3,265.4Z" fill="#b79a3a"/>
<path d="M618.2,248.4L619.2,250.3L618.6,252.2L620.9,255.0L622.6,254.0L627.5,253.8L629.1,254.6L631.8,254.9L633.5,254.4L636.0,255.6L637.3,254.3L639.9,255.8L640.4,254.9L641.4,254.7L643.5,255.5L647.7,256.1L653.4,258.6L654.1,259.9L657.1,260.3L659.0,262.2L658.0,265.2L658.2,269.7L659.0,270.5L661.6,270.4L667.5,272.9L668.2,273.6L668.8,273.7L667.9,272.9L667.6,271.9L668.6,270.7L673.3,269.9L675.5,272.0L676.7,271.5L676.7,271.1L673.5,268.8L673.4,267.6L674.1,266.8L680.3,267.2L681.3,266.5L683.4,266.5L683.9,265.8L683.5,265.3L677.8,264.8L676.0,261.5L671.7,261.7L668.9,259.4L667.0,256.3L660.6,254.5L659.9,256.0L658.5,256.2L654.9,253.1L651.4,251.6L648.2,252.4L641.0,249.3L640.2,250.2L639.1,250.2L637.5,248.3L628.5,250.2L625.1,249.1L624.4,248.3L622.0,247.8L620.5,248.8ZM653.7,269.2L653.4,269.0L652.8,269.1L652.9,269.5ZM648.9,269.2L648.5,269.2L648.2,269.7Z" fill="#396830" stroke="#396830" stroke-width="0.5"/>
<path d="M548.3,255.9L551.5,257.1L552.9,257.9L556.9,259.8L557.9,259.1L562.4,259.1L563.2,259.5L565.7,260.5L567.2,259.7L570.3,261.6L573.8,260.6L575.8,260.0L575.9,259.5L578.0,259.6L582.5,260.3L585.3,259.7L587.6,260.2L589.7,257.6L590.8,256.0L586.5,255.3L585.9,254.4L584.6,255.2L582.1,254.6L580.4,253.4L577.4,251.4L574.5,249.2L572.9,249.4L570.7,251.3L567.1,249.7L566.5,251.3L563.0,251.7L559.4,250.4L559.6,249.8L556.3,249.2L554.0,249.4L551.6,249.1L547.6,250.2L544.2,253.2L549.3,252.7L551.7,252.3L548.1,253.7Z" fill="#b79a3a"/>
<path d="M549.5,255.0L556.8,258.4L557.8,257.9L562.5,257.9L565.6,259.2L567.3,258.5L570.5,260.3L575.8,258.3L582.4,259.1L585.3,258.5L587.1,258.9L588.7,256.9L585.5,256.0L584.5,256.4L581.7,255.7L574.2,250.4L573.4,250.5L571.0,252.5L567.8,251.3L566.9,252.4L563.0,252.9L558.9,251.5L558.3,250.7L551.7,250.3L547.8,251.6L551.8,251.1L552.8,251.8L552.6,253.2L549.4,254.5Z" fill="#396830" stroke="#396830" stroke-width="0.5"/>
<path d="M530.3,251.3L530.9,252.4L533.8,253.2L534.9,253.2L538.8,254.9L540.0,252.6L544.8,252.7L547.5,251.2L548.9,248.4L552.4,245.9L548.6,246.9L547.2,246.8L544.5,245.3L542.9,246.0L541.0,245.9L538.8,246.7L537.2,246.4L533.9,245.3L531.6,246.5L529.9,249.8Z" fill="#b79a3a"/>
<path d="M531.2,249.9L531.7,251.4L535.3,252.1L538.2,253.3L539.7,251.4L544.5,251.5L546.6,250.3L547.7,248.1L544.5,246.7L538.7,247.9L534.0,246.6L532.5,247.4Z" fill="#396830" stroke="#396830" stroke-width="0.5"/>
<path d="M652.2,239.7L648.3,240.5L647.4,242.5L645.5,241.6L640.1,240.5L639.8,243.0L637.7,242.4L634.7,241.7L631.3,242.6L631.3,239.7L629.2,240.9L626.6,240.2L624.7,242.6L622.0,241.7L621.3,240.1L619.2,236.4L619.1,238.7L620.9,235.7L625.5,238.0L628.3,237.1L623.6,235.9L622.0,232.5L622.0,232.3L618.8,233.3L619.1,231.2L614.5,229.7L613.4,231.4L611.9,229.9L614.8,228.8L616.8,229.9L616.6,229.1L621.2,229.0L622.7,229.1L625.3,228.7L625.0,225.5L629.5,227.4L630.0,226.7L633.2,225.0L633.6,226.9L636.1,224.7L637.9,226.6L640.9,223.9L642.6,224.3L645.4,224.3L647.5,225.0L650.0,225.4L651.0,226.0L653.4,226.2L657.2,225.8L659.1,224.4L661.1,224.2L662.6,225.9L663.1,225.4L666.7,226.0L668.2,225.7L671.7,226.5L672.1,225.3L674.0,225.5L676.5,225.5L680.5,225.8L680.6,226.0L682.9,225.7L687.3,225.2L683.9,227.0L682.2,228.7L680.0,227.9L675.6,231.3L674.7,230.9L672.8,231.9L671.8,231.1L670.4,232.5L668.4,230.7L666.0,232.5L664.6,232.4L660.1,234.1L658.9,234.6L655.0,234.1L652.6,236.7L650.0,237.4L647.9,238.7L645.8,238.8L648.2,240.7Z" fill="#c9a840"/>
<path d="M624.4,231.5L625.5,233.7L629.7,234.9L630.5,235.9L630.9,237.2L632.7,237.6L633.8,239.2L637.6,239.7L638.3,238.6L639.6,237.9L643.2,238.5L644.5,236.5L647.2,236.1L651.2,234.4L654.1,231.6L658.6,231.9L663.9,229.9L665.2,229.8L666.9,228.6L663.9,228.2L661.9,228.5L660.0,226.9L658.0,228.2L653.4,228.8L650.3,228.5L645.0,226.9L641.6,226.8L638.5,229.1L637.0,229.0L635.9,228.3L633.9,229.4L631.8,228.7L630.0,229.9L627.8,229.5L626.6,230.9ZM670.1,228.8L670.3,229.0L670.4,228.9ZM672.9,228.8L675.2,228.3L675.5,228.1L673.8,228.1Z" fill="#396830" stroke="#396830" stroke-width="0.5"/>
<path d="M643.1,245.8L641.1,245.6L638.5,245.8L637.3,246.8L633.9,245.6L631.5,245.0L628.1,245.7L626.6,245.4L625.5,247.2L621.9,247.0L619.4,245.7L617.1,245.1L615.4,246.7L611.6,244.5L610.1,243.2L608.1,243.0L607.2,243.0L603.2,243.7L602.9,244.6L600.4,242.1L603.4,240.1L605.0,240.9L608.6,240.2L610.6,241.0L611.1,239.8L614.0,241.5L616.2,241.4L618.7,241.8L621.6,242.7L623.2,240.3L628.0,241.8L629.5,241.8L630.5,241.9L634.9,242.3L635.9,244.2L637.8,242.9L640.0,244.3Z" fill="#c9a840"/>
<path d="M602.4,242.3L602.9,242.5L604.7,242.1L603.5,241.6ZM607.7,241.7L608.3,241.7L609.2,241.8L608.5,241.5ZM610.9,242.2L615.2,245.1L617.0,243.8L619.8,244.4L622.2,245.7L624.8,245.9L626.4,244.2L628.1,244.4L631.6,243.7L634.7,244.5L634.1,243.6L627.8,243.0L623.8,241.8L622.6,243.6L621.6,244.0L618.4,243.1L613.6,242.7L611.7,241.6ZM636.7,245.3L637.0,245.4L638.1,244.6L637.8,244.5Z" fill="#396830" stroke="#396830" stroke-width="0.5"/>
<path d="M549.1,244.4L552.4,244.5L554.1,244.2L558.2,245.5L559.2,244.2L563.8,244.4L565.1,244.8L567.4,245.4L568.8,244.4L571.5,246.1L574.5,245.4L576.5,244.7L576.7,244.1L578.0,242.3L576.3,242.9L574.6,242.0L572.3,242.2L568.7,240.6L566.1,240.6L561.9,241.1L560.9,240.1L559.1,240.7L556.7,240.7L553.0,241.6L550.5,242.2L548.7,242.6Z" fill="#c9a840"/>
<path d="M550.5,243.4L554.2,243.1L557.8,244.2L559.0,243.1L563.8,243.3L567.2,244.2L568.9,243.3L571.7,245.0L575.7,243.8L574.4,243.2L572.0,243.3L568.4,241.7L561.8,242.2L560.6,241.3L556.8,241.8Z" fill="#396830" stroke="#396830" stroke-width="0.5"/>
<path d="M603.9,252.7L605.1,252.8L607.5,252.5L610.5,252.7L612.7,251.3L615.6,250.5L616.2,246.7L613.1,246.0L611.5,247.5L607.4,247.0L606.5,246.0L603.6,246.5L602.9,249.9Z" fill="#c9a840"/>
<path d="M604.7,251.6L610.2,251.6L612.2,250.3L614.6,249.6L614.9,247.5L613.4,247.2L611.5,248.6L607.2,248.1L606.1,247.2L604.5,247.4L604.1,249.9Z" fill="#396830" stroke="#396830" stroke-width="0.5"/>
<path d="M587.1,253.3L588.2,253.9L590.5,253.1L593.2,253.7L594.6,253.8L596.5,253.4L600.2,253.6L600.6,249.8L598.6,248.7L596.7,247.8L594.7,247.6L592.6,246.4L589.9,246.9L587.7,247.4L587.5,250.0L590.1,252.2L587.3,252.4Z" fill="#c9a840"/>
<path d="M591.2,252.1L594.5,252.7L599.2,252.4L599.4,250.4L592.4,247.6L588.7,248.3L588.7,249.5Z" fill="#396830" stroke="#396830" stroke-width="0.5"/>
<path d="M603.3,237.2L605.8,237.8L605.9,235.9L609.1,237.2L611.7,238.0L614.8,237.1L617.5,236.5L617.4,236.4L620.4,235.5L622.8,236.1L623.6,234.6L626.3,234.5L624.7,233.0L623.2,232.2L619.2,231.5L618.0,230.2L613.1,230.8L612.4,229.0L609.2,231.5L607.4,231.7L605.2,231.0L603.6,232.9L602.0,234.5Z" fill="#c9a840"/>
<path d="M605.3,234.0L606.5,234.0L611.8,235.9L619.7,233.6L618.2,233.2L617.3,232.3L612.9,232.8L611.6,232.2L609.7,233.4L607.3,233.7L605.9,233.3Z" fill="#396830" stroke="#396830" stroke-width="0.5"/>
<path d="M586.5,244.1L588.2,245.7L590.5,245.5L591.8,244.7L595.1,244.6L597.0,245.8L599.5,243.3L600.7,241.5L599.9,239.7L596.7,239.3L595.0,239.5L593.5,241.2L590.3,239.6L587.4,240.6L585.0,240.0L582.9,241.6Z" fill="#c9a840"/>
<path d="M584.8,241.5L588.6,244.5L590.2,244.4L591.7,243.6L595.1,243.5L596.9,244.4L599.5,241.4L599.2,240.7L596.7,240.4L595.6,240.5L593.7,242.3L590.3,240.8L587.6,241.7L585.2,241.2Z" fill="#396830" stroke="#396830" stroke-width="0.5"/>
</g>
<path d="M624.8,272.8L627.2,274.1L631.1,273.8L635.1,273.2L635.7,271.9L641.1,271.6L637.6,269.7L635.0,269.2L633.8,269.2L629.7,268.2L627.5,267.0L626.8,268.7L623.2,269.5Z" fill="#b79a3a"/>
<path d="M625.7,271.9L627.5,272.9L631.0,272.6L634.3,272.1L634.9,270.9L636.3,270.6L633.6,270.4L628.1,268.7L627.3,269.8L624.9,270.3Z" fill="#396830" stroke="#396830" stroke-width="0.5"/>
<path d="M777.9,267.7L780.2,267.2L782.5,266.4L784.6,265.6L786.6,265.9L789.1,266.4L791.3,265.6L794.0,266.1L796.5,266.5L798.5,265.9L800.3,266.3L802.5,266.4L805.1,269.4L803.5,270.2L801.3,271.0L799.5,271.7L797.2,271.7L794.8,272.3L792.8,273.4L790.0,273.1L787.7,272.4L785.2,272.8L782.5,272.1L780.8,270.4L779.7,269.3Z" fill="#cdb560"/>
<path d="M780.4,268.4L783.1,271.0L785.2,271.5L787.8,271.2L792.5,272.2L794.4,271.1L799.2,270.5L803.2,269.0L801.9,267.5L798.6,267.2L796.4,267.7L791.4,266.9L789.1,267.6L784.7,266.8Z" fill="#cfe2ca" stroke="#cfe2ca" stroke-width="0.5"/>
<path d="M665.1,472.5L665.4,476.5L665.1,485.0L664.6,491.1L662.4,498.5L662.2,503.3L662.2,508.2L659.7,514.3L658.2,518.0L657.0,521.6L657.7,525.3L656.8,529.7L655.5,533.8L653.8,537.5L652.3,541.6L655.0,544.8L652.6,548.5L653.1,552.1L655.5,555.8L657.5,557.8L662.9,559.2L663.9,557.4L665.4,556.0L667.6,555.6L670.0,555.4L666.1,554.6L661.4,554.6L660.4,551.4L658.0,549.7L657.5,547.7L660.4,544.8L661.2,542.4L661.9,537.5L661.9,532.6L661.7,527.7L663.1,522.9L665.1,518.0L666.1,513.1L666.6,509.0L664.9,504.6L666.3,500.9L668.1,496.0L670.3,493.6L669.8,488.7L672.7,486.3L671.3,483.3L670.5,480.2L669.8,476.5L668.6,474.1L667.3,470.4Z" fill="#c9b060"/>
<path d="M664.4,555.6L660.7,555.3L659.6,552.0L657.1,550.2L656.5,547.7L659.6,544.3L660.2,542.2L660.9,537.4L660.7,527.6L664.2,517.7L665.6,509.1L663.9,504.4L667.2,495.6L669.2,493.2L668.9,488.3L671.5,486.0L670.3,483.6L668.8,476.8L666.9,472.2L666.1,472.9L666.4,476.5L665.6,491.2L663.4,498.6L663.1,508.4L658.0,521.7L658.7,525.3L657.7,529.9L653.5,541.4L656.0,544.6L653.6,548.7L654.0,551.8L656.3,555.2L658.0,556.9L662.4,558.0Z" fill="#cfe2ca" stroke="#cfe2ca" stroke-width="0.5"/>
<path d="M865.9,283.5L863.6,283.7L860.4,285.0L858.0,285.9L855.5,286.2L852.1,284.0L850.8,280.6L850.5,276.7L850.8,275.9L854.3,274.7L859.2,272.5L861.7,272.3L865.4,269.3L868.6,266.7L873.7,263.5L875.2,261.3L878.9,260.3L882.6,257.9L885.0,257.8L890.0,256.4L896.6,255.2L901.8,254.1L907.2,254.6L914.8,256.0L912.1,257.6L914.1,257.4L909.4,259.2L910.4,258.6L906.9,256.7L902.3,257.1L901.8,258.1L901.5,259.3L899.6,260.4L896.6,259.9L893.4,260.1L888.9,259.2L887.5,260.8L882.8,260.6L877.9,263.5L874.0,266.4L872.0,270.2L873.0,270.8L868.1,272.8L868.3,277.2L869.9,278.0L868.8,278.9L869.0,280.8L867.3,281.7Z" fill="#a9a650"/>
<path d="M865.3,282.5L866.6,280.8L867.9,280.2L867.9,278.2L867.2,277.2L867.1,272.2L870.9,270.4L873.1,265.7L877.3,262.5L882.5,259.5L887.0,259.7L888.7,258.1L893.5,259.0L899.4,259.3L900.5,258.6L901.7,256.2L906.5,255.6L901.8,255.2L885.2,258.8L882.9,259.0L879.4,261.3L875.9,262.2L874.4,264.4L869.2,267.6L862.2,273.2L859.5,273.6L851.6,276.9L851.9,280.3L853.0,283.3L855.8,285.0L857.7,284.9L863.3,282.7ZM907.6,255.8L910.7,257.5L911.7,256.6Z" fill="#6da865" stroke="#6da865" stroke-width="0.5"/>
<path d="M964.3,253.8L966.3,255.3L969.1,254.9L970.4,255.3L973.9,256.0L975.7,254.8L978.2,254.8L979.8,255.5L978.9,252.2L976.5,250.1L974.8,248.2L977.4,247.3L979.1,247.3L980.4,246.0L983.1,245.0L984.8,244.5L986.9,243.9L989.0,242.7L991.2,242.8L993.3,241.9L995.5,242.7L996.9,241.2L998.8,241.2L1001.5,241.3L1002.6,241.1L1005.0,239.7L1007.3,240.2L1004.1,240.4L1003.2,240.4L1000.9,239.3L998.5,240.1L996.4,240.5L993.7,240.9L991.6,240.7L990.1,240.5L988.2,241.0L985.7,241.5L983.8,242.2L981.3,243.2L980.2,242.5L978.0,243.7L975.6,244.6L974.3,245.1L973.2,247.3L970.7,248.9L969.3,249.2L968.5,251.0L966.6,252.2Z" fill="#c9a840"/>
<path d="M967.5,253.5L969.3,253.3L973.5,254.3L975.2,253.3L977.5,253.2L973.4,249.0L970.4,250.6L969.6,252.2ZM977.4,245.7L978.4,245.7L979.1,245.0L978.6,245.2Z" fill="#6da865" stroke="#6da865" stroke-width="0.5"/>
<path d="M1108.0,422.7L1108.2,425.3L1110.1,425.6L1113.8,424.3L1118.0,424.5L1120.7,422.8L1121.4,420.6L1122.9,417.2L1128.3,417.5L1127.8,419.6L1128.6,422.3L1131.0,425.3L1128.1,425.7L1127.3,427.7L1125.6,430.9L1124.4,433.8L1123.7,436.5L1120.2,437.7L1116.3,435.8L1113.1,435.0L1109.4,434.8L1108.9,431.4L1106.7,428.9L1106.4,426.5L1106.4,424.0Z" fill="#adb876"/>
<path d="M1108.8,427.6L1110.9,430.4L1111.3,432.7L1116.8,433.6L1120.4,435.3L1121.8,434.8L1123.6,430.0L1126.1,424.8L1127.0,423.8L1125.6,419.5L1124.3,419.5L1122.5,424.1L1119.0,426.5L1114.1,426.5L1110.7,427.8Z" fill="#a6caa0" stroke="#a6caa0" stroke-width="0.5"/>
<path d="M1072.7,414.2L1078.2,415.0L1081.1,418.4L1085.0,421.6L1088.7,423.6L1092.7,426.5L1093.6,430.1L1096.4,433.3L1099.3,435.5L1098.8,441.9L1097.3,442.0L1094.9,441.1L1090.0,437.2L1085.3,430.1L1081.3,423.6L1076.9,419.6L1073.2,416.2Z" fill="#adb876"/>
<path d="M1075.3,416.1L1082.5,422.7L1091.1,436.2L1095.6,439.8L1097.4,440.4L1097.7,436.2L1095.3,434.4L1092.4,431.0L1091.4,427.4L1087.9,424.8L1084.1,422.8L1080.1,419.5L1077.4,416.4Z" fill="#a6caa0" stroke="#a6caa0" stroke-width="0.5"/>
<path d="M1161.2,429.8L1164.2,428.7L1168.2,429.8L1168.7,433.8L1170.4,435.8L1174.1,433.1L1177.8,431.6L1185.2,434.0L1185.2,449.9L1181.5,447.5L1177.0,448.2L1179.5,445.3L1177.8,441.1L1171.6,438.4L1166.7,437.2L1165.0,437.5L1163.0,434.8L1167.2,433.3L1163.0,432.6L1160.3,431.1Z" fill="#adb876"/>
<path d="M1163.1,430.8L1163.6,431.0L1166.8,431.6L1166.7,431.0L1164.3,430.4ZM1167.5,434.9L1165.6,435.6L1168.5,436.0ZM1171.7,436.8L1178.8,439.9L1181.0,444.8L1181.0,445.9L1182.1,446.0L1183.6,446.9L1183.6,435.2L1177.8,433.3L1174.9,434.5Z" fill="#a6caa0" stroke="#a6caa0" stroke-width="0.5"/>
<path d="M680.0,232.8L720.0,228.6L782.2,229.4L786.7,233.9L780.0,245.0L766.7,249.4L764.4,258.3L751.1,262.3L738.9,271.2L730.0,277.4L721.1,273.4L716.7,265.0L715.6,256.1L707.8,249.4L697.8,242.8L685.6,238.3Z" fill="#dbe9df" stroke="#e3e2b8" stroke-width="1.2" filter="url(#sb)"/>
</g>
<g clip-path="url(#lc)"><g fill="none" stroke="#f0dd80" stroke-width="3.6" stroke-linejoin="round" filter="url(#bg)" opacity="0.62"><use href="#c0"/><use href="#c1"/><use href="#c2"/><use href="#c3"/><use href="#c4"/><use href="#c5"/><use href="#c6"/><use href="#c7"/><use href="#c8"/><use href="#c9"/><use href="#c10"/><use href="#c11"/><use href="#c12"/><use href="#c13"/><use href="#c14"/></g></g>
<g fill="none" stroke="#c4a74e" stroke-width="1.1" stroke-linejoin="round" opacity="0.72" filter="url(#lb)"><use href="#c0"/><use href="#c1"/><use href="#c2"/><use href="#c3"/><use href="#c4"/><use href="#c5"/><use href="#c6"/><use href="#c7"/><use href="#c8"/><use href="#c9"/><use href="#c10"/><use href="#c11"/><use href="#c12"/><use href="#c13"/><use href="#c14"/></g>
</svg>

<!-- pan / zoom controls -->
<svg class="abs" style="left:366px;top:204px" width="62" height="170" viewBox="366 204 62 170">
  <g filter="url(#cb)">
  <rect x="383.5" y="208" width="24.5" height="75.6" rx="12.2" fill="#1f4a1c"/>
  <rect x="370.8" y="233.5" width="50.7" height="26" rx="13" fill="#1f4a1c"/>
  <rect x="383.5" y="291" width="25" height="76.4" rx="12.5" fill="#1f4a1c"/>
  <path d="M395.7 214.3 L402.2 225.8 L389.3 225.8Z M395.7 277.9 L402.2 266.3 L389.3 266.3Z M375.8 246.4 L386.8 239.7 L386.8 252.9Z M415.7 246.4 L403.2 239.7 L403.2 252.9Z" fill="#e3f0dc"/>
  <path d="M389.3 305.2 H402.3 M395.8 298.7 V311.7" stroke="#f2f7ee" stroke-width="3" fill="none"/>
  <path d="M389.3 353.4 H402.8" stroke="#e6efe0" stroke-width="3.2" fill="none"/>
  <circle cx="395.8" cy="329.3" r="11.3" fill="#eef3f6" stroke="#d9e2ea" stroke-width="1"/>
  <g fill="none" stroke="#5c7fa3" stroke-width="0.9">
    <ellipse cx="395.8" cy="329.3" rx="4.2" ry="11"/>
    <ellipse cx="395.8" cy="329.3" rx="8.3" ry="11"/>
    <ellipse cx="395.8" cy="329.3" rx="11" ry="4"/>
    <ellipse cx="395.8" cy="329.3" rx="11" ry="8"/>
    <path d="M395.8 318.3 V340.3 M384.8 329.3 H406.8"/>
  </g>
  </g>
  <defs><filter id="cb"><feGaussianBlur stdDeviation="0.5"/></filter></defs>
</svg>

<div class="abs" style="left:367px;top:661px;width:204px;height:28px;background:linear-gradient(90deg,#ffffff 0%,#eef3ec 6%,#c9dfc4 25%,#a3c79c 42%,#7fae77 55%,#5c9555 68%,#3f7a3b 80%,#27602a 90%,#1d4d1f 100%)"></div>
<div class="hline" style="top:704px"></div>
<div class="hline" style="top:754px"></div>
<div class="abs" style="left:346px;top:755px;width:1004px;height:55px;background:#f8f8f8"></div>
<div class="abs" style="left:346px;top:810px;width:1004px;height:147px;background:#fbfbfb"></div>
<div class="abs" style="left:902.5px;top:779px;width:0;height:0;border-left:5px solid transparent;border-right:5px solid transparent;border-top:4.5px solid #93a4af"></div>
<div class="hline" style="top:853px;background:#e8e8e8"></div>
<div class="hline" style="top:920px;background:#e8e8e8"></div>
<div class="hline" style="top:957px;background:#e8e8e8"></div>
<div class="bar" style="top:818px"><i style="width:93px"></i></div>
<div class="bar" style="top:875px"><i style="width:139px"></i></div>
<div class="bar" style="top:927px"><i style="width:139px"></i></div>

<div class="t" style="left:3.5px;top:3.5px;font-size:37.5px;line-height:45px;letter-spacing:-0.02px;transform:scaleX(1.043);font-weight:bold;color:#383838">Top Papers by Research Fields</div>
<div class="t" style="left:28.0px;top:131.3px;font-size:18px;line-height:22px;letter-spacing:0.17px;transform:scaleX(1.075);font-weight:bold;color:#333">Results List</div>
<div class="t" style="left:40.5px;top:170.8px;font-size:18px;line-height:22px;letter-spacing:-0.03px;transform:scaleX(1.075);color:#333;-webkit-text-stroke:0.5px #333">Research Fields</div>
<div class="t" style="left:28.0px;top:243.1px;font-size:18px;line-height:22px;letter-spacing:0.03px;transform:scaleX(1.075);font-weight:bold;color:#333">Filter Results By</div>
<div class="t" style="left:28.0px;top:277.1px;font-size:17px;line-height:20px;letter-spacing:0.00px;transform:scaleX(1.075);font-style:italic;color:#9b9b9b">Changing the filter field removes all</div>
<div class="t" style="left:28.0px;top:296.5px;font-size:17px;line-height:20px;letter-spacing:0.31px;transform:scaleX(1.075);font-style:italic;color:#9b9b9b">current filters.</div>
<div class="t" style="left:27.5px;top:322.8px;font-size:18px;line-height:22px;letter-spacing:0.04px;transform:scaleX(1.015);font-weight:bold;color:#1f4a68">Add Filter »</div>
<div class="t" style="left:62.0px;top:353.6px;font-size:18px;line-height:22px;letter-spacing:0.03px;transform:scaleX(1.023);color:#444;-webkit-text-stroke:0.5px #444">HUBEI UNIVERSITY OF</div>
<div class="t" style="left:62.0px;top:372.2px;font-size:18px;line-height:22px;letter-spacing:0.20px;transform:scaleX(1.000);color:#444;-webkit-text-stroke:0.5px #444">CHINESE MEDICINE</div>
<div class="t" style="left:27.5px;top:481.7px;font-size:18px;line-height:22px;letter-spacing:0.21px;transform:scaleX(1.075);font-weight:bold;color:#333">Include Results For</div>
<div class="t" style="left:41.5px;top:520.6px;font-size:18px;line-height:22px;letter-spacing:0.05px;transform:scaleX(1.063);color:#333;-webkit-text-stroke:0.5px #333">Top Papers</div>
<div class="t" style="left:44.8px;top:595.8px;font-size:18px;line-height:22px;letter-spacing:0.24px;transform:scaleX(1.037);color:#2b5570;-webkit-text-stroke:0.6px #2b5570">Clear</div>
<div class="t" style="left:136.8px;top:595.8px;font-size:18px;line-height:22px;letter-spacing:0.04px;transform:scaleX(1.047);color:#2b5570;-webkit-text-stroke:0.6px #2b5570">Save Criteria</div>
<div class="t" style="left:372.5px;top:129.5px;font-size:19px;line-height:23px;letter-spacing:-0.01px;transform:scaleX(1.039);font-weight:bold;color:#333">Map View by Top / Hot / Highly Cited Papers</div>
<div class="t" style="left:1124.4px;top:129.5px;font-size:19px;line-height:23px;letter-spacing:-0.03px;transform:scaleX(1.041);font-weight:bold;color:#2e4d5e">Hide Visualization</div>
<div class="t" style="left:358.8px;top:660.8px;font-size:17px;line-height:20px;letter-spacing:0.00px;transform:scaleX(1.038);color:#333">0</div>
<div class="t" style="left:484.8px;top:660.8px;font-size:17px;line-height:20px;letter-spacing:0.00px;transform:scaleX(1.000);color:#25512a;-webkit-text-stroke:0.3px #25512a">80,107</div>
<div class="t" style="left:373.3px;top:718.9px;font-size:19px;line-height:23px;letter-spacing:0.00px;transform:scaleX(1.036);font-weight:bold;color:#333">Report View by Selection</div>
<div class="t" style="left:1222.3px;top:719.3px;font-size:19px;line-height:23px;letter-spacing:-0.00px;transform:scaleX(1.034);font-weight:bold;color:#2e4d5e">Customize</div>
<div class="t" style="left:365.8px;top:760.6px;font-size:18px;line-height:22px;letter-spacing:0.00px;transform:scaleX(1.075);font-weight:bold;color:#333">Total:</div>
<div class="t" style="left:375.5px;top:782.8px;font-size:18px;line-height:22px;letter-spacing:0.00px;transform:scaleX(1.022);font-weight:bold;color:#333">3</div>
<div class="t" style="left:458.0px;top:772.4px;font-size:18px;line-height:22px;letter-spacing:0.17px;transform:scaleX(1.075);font-weight:bold;color:#333">Research Fields</div>
<div class="t" style="left:649.8px;top:760.8px;font-size:18px;line-height:22px;letter-spacing:0.18px;transform:scaleX(1.075);font-weight:bold;color:#333">Web of Science</div>
<div class="t" style="left:661.6px;top:782.8px;font-size:18px;line-height:22px;letter-spacing:0.12px;transform:scaleX(1.075);font-weight:bold;color:#333">Documents</div>
<div class="t" style="left:849.0px;top:771.4px;font-size:18px;line-height:22px;letter-spacing:0.35px;transform:scaleX(1.075);color:#5f7888;-webkit-text-stroke:0.45px #5f7888">Cites</div>
<div class="t" style="left:989.3px;top:771.4px;font-size:18px;line-height:22px;letter-spacing:0.05px;transform:scaleX(1.075);font-weight:bold;color:#333">Cites/Paper</div>
<div class="t" style="left:1179.6px;top:771.4px;font-size:18px;line-height:22px;letter-spacing:-0.00px;transform:scaleX(1.071);font-weight:bold;color:#333">Top Papers</div>
<div class="t" style="left:415.4px;top:819.8px;font-size:18px;line-height:22px;letter-spacing:0.00px;transform:scaleX(1.000);color:#444">1</div>
<div class="t" style="left:457.0px;top:809.5px;font-size:18px;line-height:22px;letter-spacing:0.00px;transform:scaleX(1.047);font-weight:bold;color:#2a5064">CLINICAL</div>
<div class="t" style="left:457.0px;top:828.0px;font-size:18px;line-height:22px;letter-spacing:0.13px;transform:scaleX(1.075);font-weight:bold;color:#2a5064">MEDICINE</div>
<div class="t" style="left:769.4px;top:819.8px;font-size:18px;line-height:22px;letter-spacing:0.48px;transform:scaleX(1.048);color:#444">551</div>
<div class="t" style="left:909.0px;top:819.5px;font-size:18px;line-height:22px;letter-spacing:0.47px;transform:scaleX(1.075);color:#444">6,474</div>
<div class="t" style="left:1075.5px;top:819.5px;font-size:18px;line-height:22px;letter-spacing:0.47px;transform:scaleX(1.075);color:#444">11.75</div>
<div class="t" style="left:414.0px;top:875.4px;font-size:18px;line-height:22px;letter-spacing:0.00px;transform:scaleX(1.075);color:#444">2</div>
<div class="t" style="left:457.0px;top:857.6px;font-size:18px;line-height:22px;letter-spacing:0.28px;transform:scaleX(1.075);font-weight:bold;color:#2a5064">PHARMACOLOG</div>
<div class="t" style="left:458.0px;top:875.4px;font-size:18px;line-height:22px;letter-spacing:0.00px;transform:scaleX(1.069);font-weight:bold;color:#2a5064">Y &amp;</div>
<div class="t" style="left:458.0px;top:893.9px;font-size:18px;line-height:22px;letter-spacing:0.05px;transform:scaleX(1.075);font-weight:bold;color:#2a5064">TOXICOLOGY</div>
<div class="t" style="left:769.4px;top:875.4px;font-size:18px;line-height:22px;letter-spacing:0.48px;transform:scaleX(1.048);color:#444">387</div>
<div class="t" style="left:910.0px;top:875.4px;font-size:18px;line-height:22px;letter-spacing:0.23px;transform:scaleX(1.075);color:#444">4,671</div>
<div class="t" style="left:1075.5px;top:875.4px;font-size:18px;line-height:22px;letter-spacing:0.00px;transform:scaleX(1.075);color:#444">12.07</div>
<div class="t" style="left:414.0px;top:927.2px;font-size:18px;line-height:22px;letter-spacing:0.00px;transform:scaleX(1.067);color:#444">0</div>
<div class="t" style="left:457.0px;top:927.2px;font-size:18px;line-height:22px;letter-spacing:0.21px;transform:scaleX(1.075);font-weight:bold;color:#2a5064">ALL FIELDS</div>
<div class="t" style="left:753.1px;top:927.2px;font-size:18px;line-height:22px;letter-spacing:-0.12px;transform:scaleX(1.075);color:#444">1,974</div>
<div class="t" style="left:898.5px;top:927.2px;font-size:18px;line-height:22px;letter-spacing:0.28px;transform:scaleX(1.075);color:#444">25,099</div>
<div class="t" style="left:1075.5px;top:927.2px;font-size:18px;line-height:22px;letter-spacing:0.00px;transform:scaleX(1.075);color:#444">12.71</div>
<div class="t" style="left:1324.0px;top:821.1px;font-size:17px;line-height:20px;letter-spacing:0.00px;transform:scaleX(1.000);color:#5a6470">2</div>
<div class="t" style="left:1324.0px;top:877.6px;font-size:17px;line-height:20px;letter-spacing:0.00px;transform:scaleX(1.000);color:#b9cdee">3</div>
<div class="t" style="left:1315.0px;top:929.6px;font-size:17px;line-height:20px;letter-spacing:0.00px;transform:scaleX(1.000);color:#dbe6f8">12</div>
<div class="t" style="left:194.5px;top:246px;font-size:16px;line-height:18px;font-weight:bold;color:#fff">?</div>
</body>
</html>
